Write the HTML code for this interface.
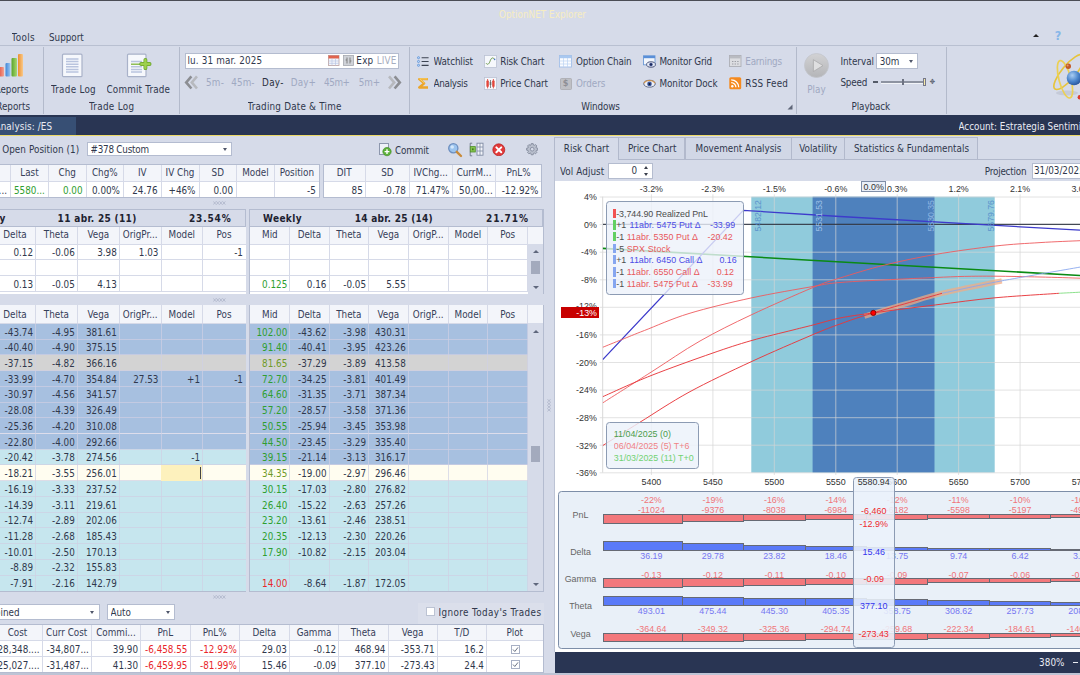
<!DOCTYPE html>
<html lang="es"><head><meta charset="utf-8"><title>OptionNET Explorer</title>
<style>
html,body{margin:0;padding:0;background:#d6dbe9}
#app{position:relative;width:1080px;height:675px;overflow:hidden;background:#d6dbe9;font-family:"DejaVu Sans Condensed","Liberation Sans",sans-serif;font-size:9.8px;color:#30384c}
#app div,#app svg.a{position:absolute}
.t,.c{white-space:nowrap;overflow:hidden}
.c{font-size:8.9px;font-family:"Liberation Sans",sans-serif}
.arr{width:0;height:0;border:2.6px solid transparent;border-top:3px solid #4f566a;border-bottom:none}
.up{width:0;height:0;border:3px solid transparent;border-bottom:3.6px solid #5f677c;border-top:none}
.dn{width:0;height:0;border:3px solid transparent;border-top:3.6px solid #5f677c;border-bottom:none}
svg text{font-family:"Liberation Sans",sans-serif}
</style></head>
<body>
<div id="app">
<div style="left:0px;top:0px;width:1080px;height:115px;background:#d6dbe9;"></div>
<div style="left:0px;top:0px;width:1080px;height:1.4px;background:#4b4d55;"></div>
<div class="t" style="left:491px;top:7.5px;width:103px;height:14px;line-height:14px;text-align:center;color:#f6edc2;letter-spacing:0.03px;">OptionNET Explorer</div>
<div class="t" style="left:11.5px;top:31px;width:35.2px;height:14px;line-height:14px;text-align:left;letter-spacing:0.41px;">Tools</div>
<div class="t" style="left:49px;top:31px;width:46.8px;height:14px;line-height:14px;text-align:left;letter-spacing:-0.01px;">Support</div>
<div class="up" style="left:1032.8px;top:34px;border-bottom-color:#222"></div>
<div class="t" style="left:1052.5px;top:29.3px;width:11px;height:14px;line-height:14px;text-align:center;color:#86b6e8;font-weight:bold;font-size:12.5px;font-family:"Liberation Sans",sans-serif;text-shadow:.5px .7px 0 #4a7fc0;">?</div>
<div style="left:0px;top:45px;width:1080px;height:1px;background:#b9c0d1;"></div>
<div style="left:43px;top:46.5px;width:1px;height:67px;background:#b3bacb;"></div>
<div style="left:179px;top:46.5px;width:1px;height:67px;background:#b3bacb;"></div>
<div style="left:409.4px;top:46.5px;width:1px;height:67px;background:#b3bacb;"></div>
<div style="left:796.2px;top:46.5px;width:1px;height:67px;background:#b3bacb;"></div>
<div style="left:946.4px;top:46.5px;width:1px;height:67px;background:#b3bacb;"></div>
<svg class="a" style="left:0px;top:53px" width="24" height="25" viewBox="0 0 24 25"><defs><linearGradient id="gr" x1="0" x2="1"><stop offset="0" stop-color="#e25a4a"/><stop offset="1" stop-color="#f3a08f"/></linearGradient><linearGradient id="gb" x1="0" x2="1"><stop offset="0" stop-color="#3f86d8"/><stop offset="1" stop-color="#9cc7f2"/></linearGradient><linearGradient id="gg" x1="0" x2="1"><stop offset="0" stop-color="#5aa42c"/><stop offset="1" stop-color="#a9d86f"/></linearGradient><linearGradient id="go" x1="0" x2="1"><stop offset="0" stop-color="#ee8f2c"/><stop offset="1" stop-color="#f8c98a"/></linearGradient></defs><rect x="-1" y="14" width="5" height="9.5" rx="1" fill="url(#gr)"/><rect x="5.5" y="10" width="5" height="13.5" rx="1" fill="url(#gb)"/><rect x="11.5" y="5" width="5.5" height="18.5" rx="1" fill="url(#gg)"/><rect x="18" y="1" width="5" height="22.5" rx="1" fill="url(#go)"/></svg>
<div class="t" style="left:-20px;top:82.7px;width:48.5px;height:14px;line-height:14px;text-align:right;">Reports</div>
<div class="t" style="left:-20px;top:100.3px;width:50px;height:14px;line-height:14px;text-align:right;">Reports</div>
<svg class="a" style="left:61px;top:52.5px" width="23" height="25" viewBox="0 0 23 25"><rect x="1.5" y="1.2" width="19.5" height="22.5" rx="1" fill="#f6f8fc" stroke="#a9b2c9" stroke-width="1.2"/><path d="M5 6h12.5M5 8.6h12.5M5 11.2h12.5M5 13.8h12.5M5 16.4h12.5M5 19h12.5" stroke="#b9c4de" stroke-width="1.5"/></svg>
<div class="t" style="left:51px;top:82.6px;width:56.7px;height:14px;line-height:14px;text-align:left;letter-spacing:0.27px;">Trade Log</div>
<svg class="a" style="left:126px;top:52.5px" width="27" height="25" viewBox="0 0 27 25"><rect x="1.5" y="1.2" width="18.5" height="22.5" rx="1" fill="#f6f8fc" stroke="#a9b2c9" stroke-width="1.2"/><path d="M5 8.6h11M5 13.8h11M5 16.4h11M5 19h11" stroke="#b9c4de" stroke-width="1.5"/><path d="M5 11.2h10" stroke="#7db43a" stroke-width="1.3"/><path d="M19.4 6.8v8.4M15.2 11h8.4" stroke="#6aa52a" stroke-width="3.8" stroke-linecap="round"/><path d="M19.4 7v8M15.4 11h8" stroke="#9ed04e" stroke-width="2.4" stroke-linecap="round"/></svg>
<div class="t" style="left:106.5px;top:82.6px;width:75.5px;height:14px;line-height:14px;text-align:left;letter-spacing:0.19px;">Commit Trade</div>
<div class="t" style="left:89px;top:100.3px;width:57px;height:14px;line-height:14px;text-align:left;letter-spacing:0.31px;">Trade Log</div>
<div style="left:185px;top:52.6px;width:213.7px;height:16.2px;background:#fff;border:1px solid #b4bccf;box-sizing:border-box;"></div>
<div class="t" style="left:187.4px;top:54.2px;width:86.8px;height:14px;line-height:14px;text-align:left;letter-spacing:0.16px;">lu. 31 mar. 2025</div>
<svg class="a" style="left:328px;top:55px" width="11.5" height="11" viewBox="0 0 11.5 11"><rect x=".5" y=".5" width="10.5" height="10" fill="#f4f6fb" stroke="#b8a0a0" stroke-width=".8"/><rect x=".5" y=".5" width="10.5" height="3" fill="#e0644e"/><path d="M.5 6h10.5M.5 8.3h10.5M4 3.5v7M7.5 3.5v7" stroke="#b9c6e4" stroke-width=".7"/></svg>
<svg class="a" style="left:342.5px;top:55px" width="11" height="11" viewBox="0 0 11 11"><rect x=".5" y=".5" width="10" height="10" fill="#cfd2d8" stroke="#a5a8b0" stroke-width=".8"/><path d="M4 2.5v6M7 2.5v6M2.6 5h1.4M7 6h1.4" stroke="#777" stroke-width=".9"/></svg>
<div class="t" style="left:356.3px;top:54.2px;width:28.9px;height:14px;line-height:14px;text-align:left;letter-spacing:0.26px;">Exp</div>
<div class="t" style="left:376.7px;top:54.2px;width:31.7px;height:14px;line-height:14px;text-align:left;color:#a6adc0;letter-spacing:0.20px;">LIVE</div>
<svg class="a" style="left:184px;top:74.6px" width="15" height="15" viewBox="0 0 15 15"><path d="M7.4 1.3L2.2 7.4l5.2 6.1" fill="none" stroke="#8c8e93" stroke-width="2.6"/><path d="M13 1.3L7.8 7.4l5.2 6.1" fill="none" stroke="#b7b9be" stroke-width="2.6"/></svg>
<svg class="a" style="left:387px;top:74.6px" width="15" height="15" viewBox="0 0 15 15"><path d="M2 1.3l5.2 6.1L2 13.5" fill="none" stroke="#b7b9be" stroke-width="2.6"/><path d="M7.6 1.3l5.2 6.1-5.2 6.1" fill="none" stroke="#8c8e93" stroke-width="2.6"/></svg>
<div class="t" style="left:205.9px;top:76.3px;width:30.1px;height:14px;line-height:14px;text-align:left;color:#a0a9c2;letter-spacing:0.36px;">5m-</div>
<div class="t" style="left:231.3px;top:76.3px;width:35.2px;height:14px;line-height:14px;text-align:left;color:#a0a9c2;letter-spacing:0.07px;">45m-</div>
<div class="t" style="left:262.1px;top:76.3px;width:33.3px;height:14px;line-height:14px;text-align:left;color:#2b3140;letter-spacing:0.29px;">Day-</div>
<div class="t" style="left:290.8px;top:76.3px;width:37px;height:14px;line-height:14px;text-align:left;color:#a0a9c2;letter-spacing:0.07px;">Day+</div>
<div class="t" style="left:323.9px;top:76.3px;width:38.1px;height:14px;line-height:14px;text-align:left;color:#a0a9c2;letter-spacing:-0.36px;">45m+</div>
<div class="t" style="left:358.7px;top:76.3px;width:33.5px;height:14px;line-height:14px;text-align:left;color:#a0a9c2;letter-spacing:-0.04px;">5m+</div>
<div class="t" style="left:247.5px;top:100.3px;width:105.8px;height:14px;line-height:14px;text-align:left;letter-spacing:0.21px;">Trading Date &amp; Time</div>
<svg class="a" style="left:417px;top:56px" width="12" height="11" viewBox="0 0 12 11"><g fill="#bcd8f6" stroke="#4f8ad8" stroke-width=".7"><circle cx="1.5" cy="1.7" r="1.05"/><circle cx="1.5" cy="5.5" r="1.05"/><circle cx="1.5" cy="9.3" r="1.05"/></g><path d="M4.6 1.7h7M4.6 5.5h7M4.6 9.3h7" stroke="#3c4352" stroke-width="1.15"/></svg>
<div class="t" style="left:433.6px;top:54.7px;width:51.4px;height:14px;line-height:14px;text-align:left;letter-spacing:-0.12px;">Watchlist</div>
<svg class="a" style="left:417px;top:77px" width="12.5" height="12.5" viewBox="0 0 12.5 12.5"><path d="M11 2.2H2.2L7.2 6.3 2.2 10.5H11" fill="none" stroke="#eba52a" stroke-width="2.3" stroke-linejoin="round"/><path d="M10.6 1.9H2.6L7.4 6" fill="none" stroke="#fad671" stroke-width=".9"/></svg>
<div class="t" style="left:433.6px;top:76.7px;width:46.2px;height:14px;line-height:14px;text-align:left;letter-spacing:-0.30px;">Analysis</div>
<svg class="a" style="left:483.5px;top:55px" width="13" height="13" viewBox="0 0 13 13"><rect x=".5" y=".5" width="12" height="12" fill="#f6f8fc" stroke="#bcc3d4" stroke-width=".8"/><path d="M2 8.2c1.8 2.4 3.2.4 4.2-2.4s2.4-4 4.2-1.6" fill="none" stroke="#6f9a4e" stroke-width="1"/><circle cx="10.6" cy="4.4" r=".8" fill="#4a78c8"/></svg>
<div class="t" style="left:500.2px;top:54.7px;width:56.4px;height:14px;line-height:14px;text-align:left;letter-spacing:-0.10px;">Risk Chart</div>
<svg class="a" style="left:483.5px;top:77px" width="13" height="13" viewBox="0 0 13 13"><rect x=".5" y=".5" width="12" height="12" fill="#f6f8fc" stroke="#bcc3d4" stroke-width=".8"/><path d="M3.6 2v9.4M9.4 2v9.4" stroke="#d9362c" stroke-width=".8"/><path d="M6.5 3v8" stroke="#555" stroke-width=".7"/><rect x="2.4" y="3.6" width="2.4" height="6.2" rx=".6" fill="#e2463c"/><rect x="8.2" y="3.6" width="2.4" height="6.2" rx=".6" fill="#e2463c"/><rect x="5.7" y="5" width="1.6" height="3" fill="#6a6a6a"/></svg>
<div class="t" style="left:500.2px;top:76.7px;width:59.8px;height:14px;line-height:14px;text-align:left;letter-spacing:-0.07px;">Price Chart</div>
<svg class="a" style="left:559px;top:55px" width="13" height="12.5" viewBox="0 0 13 12.5"><rect x=".5" y=".5" width="12" height="11.5" fill="#fbfcff" stroke="#a3bfe8" stroke-width=".9"/><rect x=".9" y=".9" width="11.2" height="2.3" fill="#a9c8f0"/><path d="M.5 6h12M.5 9h12M4.5 3v9M8.5 3v9" stroke="#bcd2f2" stroke-width=".7"/></svg>
<div class="t" style="left:576px;top:54.7px;width:67.5px;height:14px;line-height:14px;text-align:left;letter-spacing:-0.17px;">Option Chain</div>
<svg class="a" style="left:559.5px;top:77.5px" width="12" height="12" viewBox="0 0 12 12"><rect x=".5" y=".5" width="11" height="11" rx="1" fill="#bfc0c5" stroke="#a8a9af" stroke-width=".8"/></svg>
<div class="t" style="left:560.5px;top:78px;width:10px;height:11.5px;line-height:11.5px;text-align:center;color:#8e8f95;font-size:9px;font-weight:bold;font-family:"Liberation Sans",sans-serif;">$</div>
<div class="t" style="left:576px;top:76.7px;width:41.3px;height:14px;line-height:14px;text-align:left;color:#a0a9c2;letter-spacing:-0.07px;">Orders</div>
<svg class="a" style="left:642.5px;top:55px" width="13" height="13" viewBox="0 0 13 13"><rect x=".5" y=".8" width="11.5" height="9" fill="#f2f6fc" stroke="#6d9ad6" stroke-width=".9"/><rect x=".5" y=".8" width="11.5" height="2.4" fill="#5a8fd8"/><ellipse cx="8" cy="9.5" rx="4.4" ry="2.7" fill="#e4e9f4" stroke="#3f4a72" stroke-width=".9"/><circle cx="8" cy="9.5" r="1.7" fill="#34478a"/><circle cx="8" cy="9.5" r=".7" fill="#141a30"/></svg>
<div class="t" style="left:659.4px;top:54.7px;width:64.8px;height:14px;line-height:14px;text-align:left;letter-spacing:-0.18px;">Monitor Grid</div>
<svg class="a" style="left:642.5px;top:78.5px" width="13" height="9" viewBox="0 0 13 9"><ellipse cx="6.5" cy="4.7" rx="5.8" ry="3.5" fill="#eef1f8" stroke="#56607c" stroke-width=".9"/><path d="M.9 4.2C3 .6 10 .6 12.1 4.2" fill="none" stroke="#d29246" stroke-width="1.1"/><circle cx="6.5" cy="4.9" r="2.3" fill="#3c58a0"/><circle cx="6.5" cy="4.9" r="1" fill="#10162c"/></svg>
<div class="t" style="left:659.4px;top:76.7px;width:70.1px;height:14px;line-height:14px;text-align:left;letter-spacing:-0.03px;">Monitor Dock</div>
<svg class="a" style="left:729px;top:55px" width="12.5" height="12" viewBox="0 0 12.5 12"><rect x=".5" y=".5" width="11.5" height="11" fill="#dcdde1" stroke="#adafb6" stroke-width=".9"/><rect x=".9" y=".9" width="10.7" height="2.5" fill="#b9bbc1"/><path d="M3 6.5h1.4M5.6 6.5H7M8.2 6.5h1.4M3 9h1.4M5.6 9H7M8.2 9h1.4" stroke="#9c9ea6" stroke-width="1.2"/></svg>
<div class="t" style="left:745.3px;top:54.7px;width:48.7px;height:14px;line-height:14px;text-align:left;color:#a0a9c2;letter-spacing:-0.22px;">Earnings</div>
<svg class="a" style="left:729px;top:77px" width="12.5" height="12.5" viewBox="0 0 12.5 12.5"><rect x=".3" y=".3" width="11.9" height="11.9" rx="1.5" fill="#f58a1f"/><circle cx="3.3" cy="9.2" r="1.2" fill="#fff"/><path d="M2.2 5.6a4.7 4.7 0 0 1 4.7 4.7M2.2 2.8a7.5 7.5 0 0 1 7.5 7.5" fill="none" stroke="#fff" stroke-width="1.3"/></svg>
<div class="t" style="left:745.3px;top:76.7px;width:54.6px;height:14px;line-height:14px;text-align:left;letter-spacing:0.21px;">RSS Feed</div>
<div class="t" style="left:581.3px;top:100.3px;width:50.7px;height:14px;line-height:14px;text-align:left;letter-spacing:-0.11px;">Windows</div>
<svg class="a" style="left:787px;top:104.4px" width="6" height="6" viewBox="0 0 6 6"><path d="M5.5.5v5H.5z" fill="#5f6678"/></svg>
<svg class="a" style="left:804px;top:53.1px" width="25" height="25" viewBox="0 0 25 25"><defs><linearGradient id="pg" x1="0" y1="0" x2="0" y2="1"><stop offset="0" stop-color="#d2d2d4"/><stop offset="1" stop-color="#b4b5b8"/></linearGradient></defs><circle cx="12.5" cy="12.5" r="12" fill="url(#pg)" stroke="#c3c5cc" stroke-width=".8"/><path d="M9.4 6.7l9.6 5.9-9.6 5.9z" fill="#dfdfe0" stroke="#a9a9ab" stroke-width=".8" stroke-linejoin="round"/></svg>
<div class="t" style="left:799.31px;top:82.6px;width:34.38px;height:14px;line-height:14px;text-align:center;color:#a0a9c2;">Play</div>
<div class="t" style="left:840.4px;top:54.7px;width:45.6px;height:14px;line-height:14px;text-align:left;letter-spacing:-0.02px;">Interval</div>
<div style="left:876.3px;top:53.1px;width:42.1px;height:15.5px;background:#fff;border:1px solid #b4bccf;box-sizing:border-box;"></div>
<div class="t" style="left:879.8px;top:54.7px;width:31.5px;height:14px;line-height:14px;text-align:left;letter-spacing:-0.15px;">30m</div>
<div class="arr" style="left:908.5px;top:59.5px"></div>
<div class="t" style="left:840.4px;top:76px;width:39.1px;height:14px;line-height:14px;text-align:left;letter-spacing:-0.14px;">Speed</div>
<div style="left:872.8px;top:81.2px;width:5px;height:1.4px;background:#555b68;"></div>
<div style="left:881.4px;top:81.2px;width:41.2px;height:1.6px;background:#8d93a1;"></div>
<div style="left:881.4px;top:82.6px;width:41.2px;height:0.8px;background:#f2f4f8;"></div>
<div style="left:902.3px;top:79.3px;width:1.4px;height:5.4px;background:#6d7382;"></div>
<div style="left:922.6px;top:77.8px;width:3.2px;height:8.6px;background:#f5e9a8;border:1px solid #77798a;box-sizing:border-box;"></div>
<div class="t" style="left:928.5px;top:76px;width:8px;height:12px;line-height:12px;text-align:center;color:#555b68;font-size:7px;">✥</div>
<div class="t" style="left:851.5px;top:100.3px;width:50.7px;height:14px;line-height:14px;text-align:left;letter-spacing:-0.09px;">Playback</div>
<svg class="a" style="left:1040px;top:50px" width="40" height="58" viewBox="0 0 40 58"><defs><radialGradient id="ag" cx=".38" cy=".32" r=".75"><stop offset="0" stop-color="#a9cdf2"/><stop offset=".55" stop-color="#4c86cc"/><stop offset="1" stop-color="#234f94"/></radialGradient></defs><ellipse cx="27" cy="43" rx="11" ry="2.6" fill="#bfc4d2" opacity=".75"/><ellipse cx="29" cy="22" rx="22" ry="7" fill="none" stroke="#e6c43c" stroke-width="1.7" transform="rotate(-50 29 22)"/><ellipse cx="25" cy="29.3" rx="6" ry="19.3" fill="none" stroke="#ecd053" stroke-width="1.7" transform="rotate(-15 25 29.3)"/><circle cx="34" cy="28" r="7.3" fill="url(#ag)"/><circle cx="28.3" cy="16.3" r="2.7" fill="#c25a28"/><circle cx="27.6" cy="15.5" r="1" fill="#e59a6a"/><circle cx="39.8" cy="47.3" r="2.2" fill="#dc3a30"/></svg>
<div style="left:0px;top:114.6px;width:1080px;height:20.6px;background:#293553;"></div>
<div style="left:0px;top:117px;width:76px;height:18px;background:#374f74;"></div>
<div class="t" style="left:-5.5px;top:120.2px;width:69.5px;height:14px;line-height:14px;text-align:left;color:#e9ecf3;letter-spacing:0.11px;">Analysis: /ES</div>
<div class="t" style="left:958.5px;top:120px;width:154.55px;height:14px;line-height:14px;text-align:left;color:#e9ecf3;">Account: Estrategia Sentimiento</div>
<div style="left:0px;top:134.8px;width:1080px;height:1.5px;background:#ecd968;"></div>
<div style="left:0px;top:136px;width:555px;height:539px;background:#d6dbe9;"></div>
<div class="t" style="left:2.2px;top:142.3px;width:90px;height:15px;line-height:15px;text-align:left;letter-spacing:0.07px;">Open Position (1)</div>
<div style="left:87px;top:142.4px;width:145px;height:14px;background:#fff;border:1px solid #b4bcd0;box-sizing:border-box;"></div>
<div class="t" style="left:90.5px;top:143.2px;width:120px;height:14px;line-height:14px;text-align:left;letter-spacing:-0.23px;">#378 Custom</div>
<div class="arr" style="left:222.5px;top:148px"></div>
<svg class="a" style="left:378px;top:142px" width="14" height="15" viewBox="0 0 14 15"><rect x="1.5" y="1.5" width="9" height="11" fill="#eef1f8" stroke="#8d97ad"/><circle cx="9" cy="9.6" r="4.2" fill="#5db03a" stroke="#3d8a22" stroke-width=".6"/><path d="M9 7.2v4.8M6.6 9.6h4.8" stroke="#fff" stroke-width="1.4"/></svg>
<div class="t" style="left:395px;top:142.5px;width:40px;height:15px;line-height:15px;text-align:left;letter-spacing:-0.13px;">Commit</div>
<svg class="a" style="left:447px;top:142px" width="16" height="16" viewBox="0 0 16 16"><circle cx="6.3" cy="6.3" r="4.6" fill="#9cc4ee" stroke="#6d8fc0" stroke-width="1.3"/><circle cx="5.2" cy="5" r="1.8" fill="#d4e8fb"/><path d="M9.8 9.8l4.2 4.2" stroke="#c98a3a" stroke-width="2.4" stroke-linecap="round"/></svg>
<svg class="a" style="left:469px;top:142px" width="16" height="15" viewBox="0 0 16 15"><path d="M3.2 1.2h-2v12.6h2" fill="none" stroke="#6b7486" stroke-width=".9"/><rect x="1.3" y="4.6" width="5" height="5.4" fill="#86c44e" stroke="#4f8f28" stroke-width=".8"/><rect x="3" y="6.4" width="1.6" height="1.8" fill="#3f7a1f"/><rect x="8" y="1.2" width="6" height="12" fill="#f3f5fa" stroke="#7f8aa3" stroke-width=".9"/><path d="M8 5h6M8 9h6M11 1.2v12" stroke="#7f8aa3" stroke-width=".8"/></svg>
<svg class="a" style="left:492.2px;top:142.9px" width="13.6" height="13.6" viewBox="0 0 15 15"><circle cx="7.5" cy="7.5" r="6.6" fill="#e23a3a" stroke="#b51d1d" stroke-width=".8"/><path d="M4.8 4.8l5.4 5.4M10.2 4.8l-5.4 5.4" stroke="#fff" stroke-width="2.2" stroke-linecap="round"/></svg>
<svg class="a" style="left:525.6px;top:143.2px" width="12.4" height="12.4" viewBox="0 0 14 14"><path d="M13.30 5.90L13.30 8.10L11.71 8.37L11.29 9.36L12.24 10.68L10.68 12.24L9.36 11.29L8.37 11.71L8.10 13.30L5.90 13.30L5.63 11.71L4.64 11.29L3.32 12.24L1.76 10.68L2.71 9.36L2.29 8.37L0.70 8.10L0.70 5.90L2.29 5.63L2.71 4.64L1.76 3.32L3.32 1.76L4.64 2.71L5.63 2.29L5.90 0.70L8.10 0.70L8.37 2.29L9.36 2.71L10.68 1.76L12.24 3.32L11.29 4.64L11.71 5.63Z" fill="#b9bfcd" stroke="#7a8294" stroke-width=".9" stroke-linejoin="round"/><circle cx="7" cy="7" r="2.1" fill="#d6dbe9" stroke="#7d8597" stroke-width=".9"/></svg>
<div style="left:-28px;top:164px;width:347.3px;height:33px;background:#fff;"></div>
<div style="left:-28px;top:164px;width:347.3px;height:17.3px;background:#f3f5fa;"></div>
<div style="left:-28px;top:180.8px;width:347.3px;height:1px;background:#d6dae8;"></div>
<div style="left:10px;top:164px;width:1px;height:17.3px;background:#d6dae8;"></div>
<div style="left:10px;top:181.3px;width:1px;height:15.7px;background:#d6dae8;"></div>
<div style="left:48px;top:164px;width:1px;height:17.3px;background:#d6dae8;"></div>
<div style="left:48px;top:181.3px;width:1px;height:15.7px;background:#d6dae8;"></div>
<div style="left:85.5px;top:164px;width:1px;height:17.3px;background:#d6dae8;"></div>
<div style="left:85.5px;top:181.3px;width:1px;height:15.7px;background:#d6dae8;"></div>
<div style="left:123px;top:164px;width:1px;height:17.3px;background:#d6dae8;"></div>
<div style="left:123px;top:181.3px;width:1px;height:15.7px;background:#d6dae8;"></div>
<div style="left:160.5px;top:164px;width:1px;height:17.3px;background:#d6dae8;"></div>
<div style="left:160.5px;top:181.3px;width:1px;height:15.7px;background:#d6dae8;"></div>
<div style="left:198.5px;top:164px;width:1px;height:17.3px;background:#d6dae8;"></div>
<div style="left:198.5px;top:181.3px;width:1px;height:15.7px;background:#d6dae8;"></div>
<div style="left:236px;top:164px;width:1px;height:17.3px;background:#d6dae8;"></div>
<div style="left:236px;top:181.3px;width:1px;height:15.7px;background:#d6dae8;"></div>
<div style="left:274px;top:164px;width:1px;height:17.3px;background:#d6dae8;"></div>
<div style="left:274px;top:181.3px;width:1px;height:15.7px;background:#d6dae8;"></div>
<div class="t" style="left:10.5px;top:163.7px;width:38px;height:17.3px;line-height:17.3px;text-align:center;color:#364059;">Last</div>
<div class="t" style="left:48.5px;top:163.7px;width:37.5px;height:17.3px;line-height:17.3px;text-align:center;color:#364059;">Chg</div>
<div class="t" style="left:86px;top:163.7px;width:37.5px;height:17.3px;line-height:17.3px;text-align:center;color:#364059;">Chg%</div>
<div class="t" style="left:123.5px;top:163.7px;width:37.5px;height:17.3px;line-height:17.3px;text-align:center;color:#364059;">IV</div>
<div class="t" style="left:161px;top:163.7px;width:38px;height:17.3px;line-height:17.3px;text-align:center;color:#364059;">IV Chg</div>
<div class="t" style="left:199px;top:163.7px;width:37.5px;height:17.3px;line-height:17.3px;text-align:center;color:#364059;">SD</div>
<div class="t" style="left:236.5px;top:163.7px;width:38px;height:17.3px;line-height:17.3px;text-align:center;color:#364059;">Model</div>
<div class="t" style="left:274.5px;top:163.7px;width:44.8px;height:17.3px;line-height:17.3px;text-align:center;color:#364059;">Position</div>
<div class="t" style="left:-27.5px;top:183.2px;width:38px;height:15.7px;line-height:15.7px;text-align:right;padding-right:3.5px;box-sizing:border-box;">...</div>
<div class="t" style="left:10.5px;top:183.2px;width:38px;height:15.7px;line-height:15.7px;text-align:left;color:#2f9e2f;padding-left:3.5px;box-sizing:border-box;">5580...</div>
<div class="t" style="left:48.5px;top:183.2px;width:37.5px;height:15.7px;line-height:15.7px;text-align:right;color:#2f9e2f;padding-right:3.5px;box-sizing:border-box;">0.00</div>
<div class="t" style="left:86px;top:183.2px;width:37.5px;height:15.7px;line-height:15.7px;text-align:right;padding-right:3.5px;box-sizing:border-box;">0.00%</div>
<div class="t" style="left:123.5px;top:183.2px;width:37.5px;height:15.7px;line-height:15.7px;text-align:right;padding-right:3.5px;box-sizing:border-box;">24.76</div>
<div class="t" style="left:161px;top:183.2px;width:38px;height:15.7px;line-height:15.7px;text-align:right;padding-right:3.5px;box-sizing:border-box;">+46%</div>
<div class="t" style="left:199px;top:183.2px;width:37.5px;height:15.7px;line-height:15.7px;text-align:right;padding-right:3.5px;box-sizing:border-box;">0.00</div>
<div class="t" style="left:274.5px;top:183.2px;width:44.8px;height:15.7px;line-height:15.7px;text-align:right;padding-right:3.5px;box-sizing:border-box;">-5</div>
<div style="left:-28px;top:164px;width:347.8px;height:33.5px;border:1px solid #b4bcd0;box-sizing:border-box;"></div>
<div style="left:322.5px;top:164px;width:219px;height:33px;background:#fff;"></div>
<div style="left:322.5px;top:164px;width:219px;height:17.3px;background:#f3f5fa;"></div>
<div style="left:322.5px;top:180.8px;width:219px;height:1px;background:#d6dae8;"></div>
<div style="left:365.3px;top:164px;width:1px;height:17.3px;background:#d6dae8;"></div>
<div style="left:365.3px;top:181.3px;width:1px;height:15.7px;background:#d6dae8;"></div>
<div style="left:408.5px;top:164px;width:1px;height:17.3px;background:#d6dae8;"></div>
<div style="left:408.5px;top:181.3px;width:1px;height:15.7px;background:#d6dae8;"></div>
<div style="left:451.9px;top:164px;width:1px;height:17.3px;background:#d6dae8;"></div>
<div style="left:451.9px;top:181.3px;width:1px;height:15.7px;background:#d6dae8;"></div>
<div style="left:495.2px;top:164px;width:1px;height:17.3px;background:#d6dae8;"></div>
<div style="left:495.2px;top:181.3px;width:1px;height:15.7px;background:#d6dae8;"></div>
<div class="t" style="left:322.5px;top:163.7px;width:43.3px;height:17.3px;line-height:17.3px;text-align:center;color:#364059;">DIT</div>
<div class="t" style="left:365.8px;top:163.7px;width:43.2px;height:17.3px;line-height:17.3px;text-align:center;color:#364059;">SD</div>
<div class="t" style="left:409px;top:163.7px;width:43.4px;height:17.3px;line-height:17.3px;text-align:center;color:#364059;">IVChg...</div>
<div class="t" style="left:452.4px;top:163.7px;width:43.3px;height:17.3px;line-height:17.3px;text-align:center;color:#364059;">CurrM...</div>
<div class="t" style="left:495.7px;top:163.7px;width:45.8px;height:17.3px;line-height:17.3px;text-align:center;color:#364059;">PnL%</div>
<div class="t" style="left:322.5px;top:183.2px;width:43.3px;height:15.7px;line-height:15.7px;text-align:right;padding-right:3px;box-sizing:border-box;">85</div>
<div class="t" style="left:365.8px;top:183.2px;width:43.2px;height:15.7px;line-height:15.7px;text-align:right;padding-right:3px;box-sizing:border-box;">-0.78</div>
<div class="t" style="left:409px;top:183.2px;width:43.4px;height:15.7px;line-height:15.7px;text-align:right;padding-right:3px;box-sizing:border-box;">71.47%</div>
<div class="t" style="left:452.4px;top:183.2px;width:43.3px;height:15.7px;line-height:15.7px;text-align:right;padding-right:3px;box-sizing:border-box;">50,00...</div>
<div class="t" style="left:495.7px;top:183.2px;width:45.8px;height:15.7px;line-height:15.7px;text-align:right;padding-right:3px;box-sizing:border-box;">-12.92%</div>
<div style="left:322.5px;top:164px;width:219.5px;height:33.5px;border:1px solid #b4bcd0;box-sizing:border-box;"></div>
<svg class="a" style="left:212.5px;top:200.5px" width="13" height="4" viewBox="0 0 13 4"><path d="M0.3 .4l2.8 3.2M3.1 .4l-2.8 3.2M3.4 .4l2.8 3.2M6.2 .4l-2.8 3.2M6.5 .4l2.8 3.2M9.3 .4l-2.8 3.2M9.6 .4l2.8 3.2M12.4 .4l-2.8 3.2" stroke="#a9b0c6" stroke-width=".7" fill="none"/></svg>
<svg class="a" style="left:212.5px;top:298px" width="13" height="4" viewBox="0 0 13 4"><path d="M0.3 .4l2.8 3.2M3.1 .4l-2.8 3.2M3.4 .4l2.8 3.2M6.2 .4l-2.8 3.2M6.5 .4l2.8 3.2M9.3 .4l-2.8 3.2M9.6 .4l2.8 3.2M12.4 .4l-2.8 3.2" stroke="#a9b0c6" stroke-width=".7" fill="none"/></svg>
<svg class="a" style="left:212.5px;top:594.7px" width="13" height="4" viewBox="0 0 13 4"><path d="M0.3 .4l2.8 3.2M3.1 .4l-2.8 3.2M3.4 .4l2.8 3.2M6.2 .4l-2.8 3.2M6.5 .4l2.8 3.2M9.3 .4l-2.8 3.2M9.6 .4l2.8 3.2M12.4 .4l-2.8 3.2" stroke="#a9b0c6" stroke-width=".7" fill="none"/></svg>
<div style="left:-10px;top:208.7px;width:256px;height:85.5px;background:#d6dbe9;border:1px solid #b4bcd0;box-sizing:border-box;"></div>
<div class="t" style="left:-60px;top:210px;width:65.5px;height:17px;line-height:17px;text-align:right;font-weight:bold;font-size:10px;color:#1d2230;">Weekly</div>
<div class="t" style="left:57.6px;top:210px;width:100px;height:17px;line-height:17px;text-align:left;font-weight:bold;font-size:10px;color:#1d2230;letter-spacing:0.33px;">11 abr. 25 (11)</div>
<div class="t" style="left:189px;top:210px;width:61px;height:17px;line-height:17px;text-align:left;font-weight:bold;font-size:10px;color:#1d2230;letter-spacing:0.85px;">23.54%</div>
<div style="left:-10px;top:226.5px;width:255.5px;height:64.7px;background:#fff;"></div>
<div style="left:-10px;top:226.5px;width:255.5px;height:17.5px;background:#f3f5fa;"></div>
<div style="left:-10px;top:243.5px;width:255.5px;height:1px;background:#d6dae8;"></div>
<div style="left:-10px;top:259.2px;width:255.5px;height:1px;background:#d6dae8;"></div>
<div style="left:-10px;top:274.9px;width:255.5px;height:1px;background:#d6dae8;"></div>
<div style="left:35px;top:226.5px;width:1px;height:17.5px;background:#d6dae8;"></div>
<div style="left:35px;top:244px;width:1px;height:47.2px;background:#d6dae8;"></div>
<div style="left:76.8px;top:226.5px;width:1px;height:17.5px;background:#d6dae8;"></div>
<div style="left:76.8px;top:244px;width:1px;height:47.2px;background:#d6dae8;"></div>
<div style="left:118.8px;top:226.5px;width:1px;height:17.5px;background:#d6dae8;"></div>
<div style="left:118.8px;top:244px;width:1px;height:47.2px;background:#d6dae8;"></div>
<div style="left:160.5px;top:226.5px;width:1px;height:17.5px;background:#d6dae8;"></div>
<div style="left:160.5px;top:244px;width:1px;height:47.2px;background:#d6dae8;"></div>
<div style="left:202.1px;top:226.5px;width:1px;height:17.5px;background:#d6dae8;"></div>
<div style="left:202.1px;top:244px;width:1px;height:47.2px;background:#d6dae8;"></div>
<div class="t" style="left:-5.5px;top:226.2px;width:41px;height:17.5px;line-height:17.5px;text-align:center;color:#364059;">Delta</div>
<div class="t" style="left:35.5px;top:226.2px;width:41.8px;height:17.5px;line-height:17.5px;text-align:center;color:#364059;">Theta</div>
<div class="t" style="left:77.3px;top:226.2px;width:42px;height:17.5px;line-height:17.5px;text-align:center;color:#364059;">Vega</div>
<div class="t" style="left:119.3px;top:226.2px;width:41.7px;height:17.5px;line-height:17.5px;text-align:center;color:#364059;">OrigPr...</div>
<div class="t" style="left:161px;top:226.2px;width:41.6px;height:17.5px;line-height:17.5px;text-align:center;color:#364059;">Model</div>
<div class="t" style="left:202.6px;top:226.2px;width:42.9px;height:17.5px;line-height:17.5px;text-align:center;color:#364059;">Pos</div>
<div class="t" style="left:-5.5px;top:245.1px;width:41px;height:15.7px;line-height:15.7px;text-align:right;padding-right:2.5px;box-sizing:border-box;">0.12</div>
<div class="t" style="left:35.5px;top:245.1px;width:41.8px;height:15.7px;line-height:15.7px;text-align:right;padding-right:2.5px;box-sizing:border-box;">-0.06</div>
<div class="t" style="left:77.3px;top:245.1px;width:42px;height:15.7px;line-height:15.7px;text-align:right;padding-right:2.5px;box-sizing:border-box;">3.98</div>
<div class="t" style="left:119.3px;top:245.1px;width:41.7px;height:15.7px;line-height:15.7px;text-align:right;padding-right:2.5px;box-sizing:border-box;">1.03</div>
<div class="t" style="left:202.6px;top:245.1px;width:42.9px;height:15.7px;line-height:15.7px;text-align:right;padding-right:2.5px;box-sizing:border-box;">-1</div>
<div class="t" style="left:-5.5px;top:276.5px;width:41px;height:15.8px;line-height:15.8px;text-align:right;padding-right:2.5px;box-sizing:border-box;">0.13</div>
<div class="t" style="left:35.5px;top:276.5px;width:41.8px;height:15.8px;line-height:15.8px;text-align:right;padding-right:2.5px;box-sizing:border-box;">-0.05</div>
<div class="t" style="left:77.3px;top:276.5px;width:42px;height:15.8px;line-height:15.8px;text-align:right;padding-right:2.5px;box-sizing:border-box;">4.13</div>
<div style="left:-10px;top:291px;width:256px;height:1px;background:#d6dae8;"></div>
<div style="left:-10px;top:291.5px;width:255.5px;height:2.2px;background:#fff;"></div>
<div style="left:-10px;top:226px;width:256px;height:1px;background:#b4bcd0;"></div>
<div style="left:249.1px;top:208.7px;width:294.4px;height:85.5px;background:#d6dbe9;border:1px solid #b4bcd0;box-sizing:border-box;"></div>
<div class="t" style="left:263px;top:210px;width:60px;height:17px;line-height:17px;text-align:left;font-weight:bold;font-size:10px;color:#1d2230;letter-spacing:0.36px;">Weekly</div>
<div class="t" style="left:354.8px;top:210px;width:100px;height:17px;line-height:17px;text-align:left;font-weight:bold;font-size:10px;color:#1d2230;letter-spacing:0.27px;">14 abr. 25 (14)</div>
<div class="t" style="left:486px;top:210px;width:58px;height:17px;line-height:17px;text-align:left;font-weight:bold;font-size:10px;color:#1d2230;letter-spacing:0.89px;">21.71%</div>
<div style="left:250px;top:226.5px;width:292.5px;height:64.7px;background:#fff;"></div>
<div style="left:250px;top:226.5px;width:292.5px;height:17.5px;background:#f3f5fa;"></div>
<div style="left:250px;top:243.5px;width:292.5px;height:1px;background:#d6dae8;"></div>
<div style="left:250px;top:259.2px;width:292.5px;height:1px;background:#d6dae8;"></div>
<div style="left:250px;top:274.9px;width:292.5px;height:1px;background:#d6dae8;"></div>
<div style="left:289.3px;top:226.5px;width:1px;height:17.5px;background:#d6dae8;"></div>
<div style="left:289.3px;top:244px;width:1px;height:47.2px;background:#d6dae8;"></div>
<div style="left:328.5px;top:226.5px;width:1px;height:17.5px;background:#d6dae8;"></div>
<div style="left:328.5px;top:244px;width:1px;height:47.2px;background:#d6dae8;"></div>
<div style="left:368.1px;top:226.5px;width:1px;height:17.5px;background:#d6dae8;"></div>
<div style="left:368.1px;top:244px;width:1px;height:47.2px;background:#d6dae8;"></div>
<div style="left:407.8px;top:226.5px;width:1px;height:17.5px;background:#d6dae8;"></div>
<div style="left:407.8px;top:244px;width:1px;height:47.2px;background:#d6dae8;"></div>
<div style="left:447.5px;top:226.5px;width:1px;height:17.5px;background:#d6dae8;"></div>
<div style="left:447.5px;top:244px;width:1px;height:47.2px;background:#d6dae8;"></div>
<div style="left:487.2px;top:226.5px;width:1px;height:17.5px;background:#d6dae8;"></div>
<div style="left:487.2px;top:244px;width:1px;height:47.2px;background:#d6dae8;"></div>
<div style="left:527.3px;top:226.5px;width:1px;height:17.5px;background:#d6dae8;"></div>
<div style="left:527.3px;top:244px;width:1px;height:47.2px;background:#d6dae8;"></div>
<div class="t" style="left:250px;top:226.2px;width:39.8px;height:17.5px;line-height:17.5px;text-align:center;color:#364059;">Mid</div>
<div class="t" style="left:289.8px;top:226.2px;width:39.2px;height:17.5px;line-height:17.5px;text-align:center;color:#364059;">Delta</div>
<div class="t" style="left:329px;top:226.2px;width:39.6px;height:17.5px;line-height:17.5px;text-align:center;color:#364059;">Theta</div>
<div class="t" style="left:368.6px;top:226.2px;width:39.7px;height:17.5px;line-height:17.5px;text-align:center;color:#364059;">Vega</div>
<div class="t" style="left:408.3px;top:226.2px;width:39.7px;height:17.5px;line-height:17.5px;text-align:center;color:#364059;">OrigP...</div>
<div class="t" style="left:448px;top:226.2px;width:39.7px;height:17.5px;line-height:17.5px;text-align:center;color:#364059;">Model</div>
<div class="t" style="left:487.7px;top:226.2px;width:40.1px;height:17.5px;line-height:17.5px;text-align:center;color:#364059;">Pos</div>
<div class="t" style="left:250px;top:276.5px;width:39.8px;height:15.8px;line-height:15.8px;text-align:right;color:#2f9e2f;padding-right:2.5px;box-sizing:border-box;">0.125</div>
<div class="t" style="left:289.8px;top:276.5px;width:39.2px;height:15.8px;line-height:15.8px;text-align:right;padding-right:2.5px;box-sizing:border-box;">0.16</div>
<div class="t" style="left:329px;top:276.5px;width:39.6px;height:15.8px;line-height:15.8px;text-align:right;padding-right:2.5px;box-sizing:border-box;">-0.05</div>
<div class="t" style="left:368.6px;top:276.5px;width:39.7px;height:15.8px;line-height:15.8px;text-align:right;padding-right:2.5px;box-sizing:border-box;">5.55</div>
<div style="left:250px;top:291px;width:292.5px;height:1px;background:#d6dae8;"></div>
<div style="left:250px;top:291.5px;width:292.5px;height:2.2px;background:#fff;"></div>
<div style="left:250px;top:226px;width:292.5px;height:1px;background:#b4bcd0;"></div>
<div style="left:528.3px;top:244px;width:14.3px;height:50px;background:#d6dbe9;"></div>
<div class="up" style="left:532.6px;top:249.5px"></div>
<div style="left:530.8px;top:260.7px;width:9px;height:13.3px;background:#a3aabd;"></div>
<div class="dn" style="left:532.6px;top:285.5px"></div>
<div style="left:-10px;top:304.8px;width:256px;height:287.01px;background:#d6dbe9;border:1px solid #b4bcd0;box-sizing:border-box;"></div>
<div style="left:-10px;top:305.3px;width:255.5px;height:285.51px;background:#fff;"></div>
<div style="left:-10px;top:305.3px;width:255.5px;height:18.1px;background:#f3f5fa;"></div>
<div style="left:-10px;top:323.4px;width:255.5px;height:15.73px;background:#a7c0e0;"></div>
<div style="left:-10px;top:339.13px;width:255.5px;height:15.73px;background:#a7c0e0;"></div>
<div style="left:-10px;top:354.86px;width:255.5px;height:15.73px;background:#d3d3d3;"></div>
<div style="left:-10px;top:370.59px;width:255.5px;height:15.73px;background:#a7c0e0;"></div>
<div style="left:-10px;top:386.32px;width:255.5px;height:15.73px;background:#a7c0e0;"></div>
<div style="left:-10px;top:402.05px;width:255.5px;height:15.73px;background:#a7c0e0;"></div>
<div style="left:-10px;top:417.78px;width:255.5px;height:15.73px;background:#a7c0e0;"></div>
<div style="left:-10px;top:433.51px;width:255.5px;height:15.73px;background:#a7c0e0;"></div>
<div style="left:-10px;top:449.24px;width:255.5px;height:15.73px;background:#c6e6ee;"></div>
<div style="left:-10px;top:464.97px;width:255.5px;height:15.73px;background:#fffdf0;"></div>
<div style="left:-10px;top:480.7px;width:255.5px;height:15.73px;background:#c6e6ee;"></div>
<div style="left:-10px;top:496.43px;width:255.5px;height:15.73px;background:#c6e6ee;"></div>
<div style="left:-10px;top:512.16px;width:255.5px;height:15.73px;background:#c6e6ee;"></div>
<div style="left:-10px;top:527.89px;width:255.5px;height:15.73px;background:#c6e6ee;"></div>
<div style="left:-10px;top:543.62px;width:255.5px;height:15.73px;background:#c6e6ee;"></div>
<div style="left:-10px;top:559.35px;width:255.5px;height:15.73px;background:#c6e6ee;"></div>
<div style="left:-10px;top:575.08px;width:255.5px;height:15.73px;background:#c6e6ee;"></div>
<div style="left:-10px;top:322.9px;width:255.5px;height:1px;background:#d6dae8;"></div>
<div style="left:-10px;top:338.63px;width:255.5px;height:1px;background:rgba(206,206,226,.7);"></div>
<div style="left:-10px;top:354.36px;width:255.5px;height:1px;background:rgba(206,206,226,.7);"></div>
<div style="left:-10px;top:370.09px;width:255.5px;height:1px;background:rgba(206,206,226,.7);"></div>
<div style="left:-10px;top:385.82px;width:255.5px;height:1px;background:rgba(206,206,226,.7);"></div>
<div style="left:-10px;top:401.55px;width:255.5px;height:1px;background:rgba(206,206,226,.7);"></div>
<div style="left:-10px;top:417.28px;width:255.5px;height:1px;background:rgba(206,206,226,.7);"></div>
<div style="left:-10px;top:433.01px;width:255.5px;height:1px;background:rgba(206,206,226,.7);"></div>
<div style="left:-10px;top:448.74px;width:255.5px;height:1px;background:rgba(206,206,226,.7);"></div>
<div style="left:-10px;top:464.47px;width:255.5px;height:1px;background:rgba(206,206,226,.7);"></div>
<div style="left:-10px;top:480.2px;width:255.5px;height:1px;background:rgba(206,206,226,.7);"></div>
<div style="left:-10px;top:495.93px;width:255.5px;height:1px;background:rgba(206,206,226,.7);"></div>
<div style="left:-10px;top:511.66px;width:255.5px;height:1px;background:rgba(206,206,226,.7);"></div>
<div style="left:-10px;top:527.39px;width:255.5px;height:1px;background:rgba(206,206,226,.7);"></div>
<div style="left:-10px;top:543.12px;width:255.5px;height:1px;background:rgba(206,206,226,.7);"></div>
<div style="left:-10px;top:558.85px;width:255.5px;height:1px;background:rgba(206,206,226,.7);"></div>
<div style="left:-10px;top:574.58px;width:255.5px;height:1px;background:rgba(206,206,226,.7);"></div>
<div style="left:35px;top:305.3px;width:1px;height:18.1px;background:#d6dae8;"></div>
<div style="left:35px;top:323.4px;width:1px;height:267.41px;background:rgba(206,208,228,.7);"></div>
<div style="left:76.8px;top:305.3px;width:1px;height:18.1px;background:#d6dae8;"></div>
<div style="left:76.8px;top:323.4px;width:1px;height:267.41px;background:rgba(206,208,228,.7);"></div>
<div style="left:118.8px;top:305.3px;width:1px;height:18.1px;background:#d6dae8;"></div>
<div style="left:118.8px;top:323.4px;width:1px;height:267.41px;background:rgba(206,208,228,.7);"></div>
<div style="left:160.5px;top:305.3px;width:1px;height:18.1px;background:#d6dae8;"></div>
<div style="left:160.5px;top:323.4px;width:1px;height:267.41px;background:rgba(206,208,228,.7);"></div>
<div style="left:202.1px;top:305.3px;width:1px;height:18.1px;background:#d6dae8;"></div>
<div style="left:202.1px;top:323.4px;width:1px;height:267.41px;background:rgba(206,208,228,.7);"></div>
<div class="t" style="left:-5.5px;top:306px;width:41px;height:18.1px;line-height:18.1px;text-align:center;color:#364059;">Delta</div>
<div class="t" style="left:35.5px;top:306px;width:41.8px;height:18.1px;line-height:18.1px;text-align:center;color:#364059;">Theta</div>
<div class="t" style="left:77.3px;top:306px;width:42px;height:18.1px;line-height:18.1px;text-align:center;color:#364059;">Vega</div>
<div class="t" style="left:119.3px;top:306px;width:41.7px;height:18.1px;line-height:18.1px;text-align:center;color:#364059;">OrigPr...</div>
<div class="t" style="left:161px;top:306px;width:41.6px;height:18.1px;line-height:18.1px;text-align:center;color:#364059;">Model</div>
<div class="t" style="left:202.6px;top:306px;width:42.9px;height:18.1px;line-height:18.1px;text-align:center;color:#364059;">Pos</div>
<div class="t" style="left:-5.5px;top:324.5px;width:41px;height:15.73px;line-height:15.73px;text-align:right;padding-right:2.5px;box-sizing:border-box;">-43.74</div>
<div class="t" style="left:35.5px;top:324.5px;width:41.8px;height:15.73px;line-height:15.73px;text-align:right;padding-right:2.5px;box-sizing:border-box;">-4.95</div>
<div class="t" style="left:77.3px;top:324.5px;width:42px;height:15.73px;line-height:15.73px;text-align:right;padding-right:2.5px;box-sizing:border-box;">381.61</div>
<div class="t" style="left:-5.5px;top:340.23px;width:41px;height:15.73px;line-height:15.73px;text-align:right;padding-right:2.5px;box-sizing:border-box;">-40.40</div>
<div class="t" style="left:35.5px;top:340.23px;width:41.8px;height:15.73px;line-height:15.73px;text-align:right;padding-right:2.5px;box-sizing:border-box;">-4.90</div>
<div class="t" style="left:77.3px;top:340.23px;width:42px;height:15.73px;line-height:15.73px;text-align:right;padding-right:2.5px;box-sizing:border-box;">375.15</div>
<div class="t" style="left:-5.5px;top:355.96px;width:41px;height:15.73px;line-height:15.73px;text-align:right;padding-right:2.5px;box-sizing:border-box;">-37.15</div>
<div class="t" style="left:35.5px;top:355.96px;width:41.8px;height:15.73px;line-height:15.73px;text-align:right;padding-right:2.5px;box-sizing:border-box;">-4.82</div>
<div class="t" style="left:77.3px;top:355.96px;width:42px;height:15.73px;line-height:15.73px;text-align:right;padding-right:2.5px;box-sizing:border-box;">366.16</div>
<div class="t" style="left:-5.5px;top:371.69px;width:41px;height:15.73px;line-height:15.73px;text-align:right;padding-right:2.5px;box-sizing:border-box;">-33.99</div>
<div class="t" style="left:35.5px;top:371.69px;width:41.8px;height:15.73px;line-height:15.73px;text-align:right;padding-right:2.5px;box-sizing:border-box;">-4.70</div>
<div class="t" style="left:77.3px;top:371.69px;width:42px;height:15.73px;line-height:15.73px;text-align:right;padding-right:2.5px;box-sizing:border-box;">354.84</div>
<div class="t" style="left:119.3px;top:371.69px;width:41.7px;height:15.73px;line-height:15.73px;text-align:right;padding-right:2.5px;box-sizing:border-box;">27.53</div>
<div class="t" style="left:161px;top:371.69px;width:41.6px;height:15.73px;line-height:15.73px;text-align:right;padding-right:2.5px;box-sizing:border-box;">+1</div>
<div class="t" style="left:202.6px;top:371.69px;width:42.9px;height:15.73px;line-height:15.73px;text-align:right;padding-right:2.5px;box-sizing:border-box;">-1</div>
<div class="t" style="left:-5.5px;top:387.42px;width:41px;height:15.73px;line-height:15.73px;text-align:right;padding-right:2.5px;box-sizing:border-box;">-30.97</div>
<div class="t" style="left:35.5px;top:387.42px;width:41.8px;height:15.73px;line-height:15.73px;text-align:right;padding-right:2.5px;box-sizing:border-box;">-4.56</div>
<div class="t" style="left:77.3px;top:387.42px;width:42px;height:15.73px;line-height:15.73px;text-align:right;padding-right:2.5px;box-sizing:border-box;">341.57</div>
<div class="t" style="left:-5.5px;top:403.15px;width:41px;height:15.73px;line-height:15.73px;text-align:right;padding-right:2.5px;box-sizing:border-box;">-28.08</div>
<div class="t" style="left:35.5px;top:403.15px;width:41.8px;height:15.73px;line-height:15.73px;text-align:right;padding-right:2.5px;box-sizing:border-box;">-4.39</div>
<div class="t" style="left:77.3px;top:403.15px;width:42px;height:15.73px;line-height:15.73px;text-align:right;padding-right:2.5px;box-sizing:border-box;">326.49</div>
<div class="t" style="left:-5.5px;top:418.88px;width:41px;height:15.73px;line-height:15.73px;text-align:right;padding-right:2.5px;box-sizing:border-box;">-25.36</div>
<div class="t" style="left:35.5px;top:418.88px;width:41.8px;height:15.73px;line-height:15.73px;text-align:right;padding-right:2.5px;box-sizing:border-box;">-4.20</div>
<div class="t" style="left:77.3px;top:418.88px;width:42px;height:15.73px;line-height:15.73px;text-align:right;padding-right:2.5px;box-sizing:border-box;">310.08</div>
<div class="t" style="left:-5.5px;top:434.61px;width:41px;height:15.73px;line-height:15.73px;text-align:right;padding-right:2.5px;box-sizing:border-box;">-22.80</div>
<div class="t" style="left:35.5px;top:434.61px;width:41.8px;height:15.73px;line-height:15.73px;text-align:right;padding-right:2.5px;box-sizing:border-box;">-4.00</div>
<div class="t" style="left:77.3px;top:434.61px;width:42px;height:15.73px;line-height:15.73px;text-align:right;padding-right:2.5px;box-sizing:border-box;">292.66</div>
<div class="t" style="left:-5.5px;top:450.34px;width:41px;height:15.73px;line-height:15.73px;text-align:right;padding-right:2.5px;box-sizing:border-box;">-20.42</div>
<div class="t" style="left:35.5px;top:450.34px;width:41.8px;height:15.73px;line-height:15.73px;text-align:right;padding-right:2.5px;box-sizing:border-box;">-3.78</div>
<div class="t" style="left:77.3px;top:450.34px;width:42px;height:15.73px;line-height:15.73px;text-align:right;padding-right:2.5px;box-sizing:border-box;">274.56</div>
<div class="t" style="left:161px;top:450.34px;width:41.6px;height:15.73px;line-height:15.73px;text-align:right;padding-right:2.5px;box-sizing:border-box;">-1</div>
<div class="t" style="left:-5.5px;top:466.07px;width:41px;height:15.73px;line-height:15.73px;text-align:right;padding-right:2.5px;box-sizing:border-box;">-18.21</div>
<div class="t" style="left:35.5px;top:466.07px;width:41.8px;height:15.73px;line-height:15.73px;text-align:right;padding-right:2.5px;box-sizing:border-box;">-3.55</div>
<div class="t" style="left:77.3px;top:466.07px;width:42px;height:15.73px;line-height:15.73px;text-align:right;padding-right:2.5px;box-sizing:border-box;">256.01</div>
<div class="t" style="left:-5.5px;top:481.8px;width:41px;height:15.73px;line-height:15.73px;text-align:right;padding-right:2.5px;box-sizing:border-box;">-16.19</div>
<div class="t" style="left:35.5px;top:481.8px;width:41.8px;height:15.73px;line-height:15.73px;text-align:right;padding-right:2.5px;box-sizing:border-box;">-3.33</div>
<div class="t" style="left:77.3px;top:481.8px;width:42px;height:15.73px;line-height:15.73px;text-align:right;padding-right:2.5px;box-sizing:border-box;">237.52</div>
<div class="t" style="left:-5.5px;top:497.53px;width:41px;height:15.73px;line-height:15.73px;text-align:right;padding-right:2.5px;box-sizing:border-box;">-14.39</div>
<div class="t" style="left:35.5px;top:497.53px;width:41.8px;height:15.73px;line-height:15.73px;text-align:right;padding-right:2.5px;box-sizing:border-box;">-3.11</div>
<div class="t" style="left:77.3px;top:497.53px;width:42px;height:15.73px;line-height:15.73px;text-align:right;padding-right:2.5px;box-sizing:border-box;">219.61</div>
<div class="t" style="left:-5.5px;top:513.26px;width:41px;height:15.73px;line-height:15.73px;text-align:right;padding-right:2.5px;box-sizing:border-box;">-12.74</div>
<div class="t" style="left:35.5px;top:513.26px;width:41.8px;height:15.73px;line-height:15.73px;text-align:right;padding-right:2.5px;box-sizing:border-box;">-2.89</div>
<div class="t" style="left:77.3px;top:513.26px;width:42px;height:15.73px;line-height:15.73px;text-align:right;padding-right:2.5px;box-sizing:border-box;">202.06</div>
<div class="t" style="left:-5.5px;top:528.99px;width:41px;height:15.73px;line-height:15.73px;text-align:right;padding-right:2.5px;box-sizing:border-box;">-11.28</div>
<div class="t" style="left:35.5px;top:528.99px;width:41.8px;height:15.73px;line-height:15.73px;text-align:right;padding-right:2.5px;box-sizing:border-box;">-2.68</div>
<div class="t" style="left:77.3px;top:528.99px;width:42px;height:15.73px;line-height:15.73px;text-align:right;padding-right:2.5px;box-sizing:border-box;">185.43</div>
<div class="t" style="left:-5.5px;top:544.72px;width:41px;height:15.73px;line-height:15.73px;text-align:right;padding-right:2.5px;box-sizing:border-box;">-10.01</div>
<div class="t" style="left:35.5px;top:544.72px;width:41.8px;height:15.73px;line-height:15.73px;text-align:right;padding-right:2.5px;box-sizing:border-box;">-2.50</div>
<div class="t" style="left:77.3px;top:544.72px;width:42px;height:15.73px;line-height:15.73px;text-align:right;padding-right:2.5px;box-sizing:border-box;">170.13</div>
<div class="t" style="left:-5.5px;top:560.45px;width:41px;height:15.73px;line-height:15.73px;text-align:right;padding-right:2.5px;box-sizing:border-box;">-8.89</div>
<div class="t" style="left:35.5px;top:560.45px;width:41.8px;height:15.73px;line-height:15.73px;text-align:right;padding-right:2.5px;box-sizing:border-box;">-2.32</div>
<div class="t" style="left:77.3px;top:560.45px;width:42px;height:15.73px;line-height:15.73px;text-align:right;padding-right:2.5px;box-sizing:border-box;">155.83</div>
<div class="t" style="left:-5.5px;top:576.18px;width:41px;height:15.73px;line-height:15.73px;text-align:right;padding-right:2.5px;box-sizing:border-box;">-7.91</div>
<div class="t" style="left:35.5px;top:576.18px;width:41.8px;height:15.73px;line-height:15.73px;text-align:right;padding-right:2.5px;box-sizing:border-box;">-2.16</div>
<div class="t" style="left:77.3px;top:576.18px;width:42px;height:15.73px;line-height:15.73px;text-align:right;padding-right:2.5px;box-sizing:border-box;">142.79</div>
<div style="left:161.3px;top:464.97px;width:41px;height:15.73px;background:#fdf1bd;"></div>
<div style="left:200px;top:466.97px;width:1px;height:12.23px;background:#444;"></div>
<div style="left:249.1px;top:304.8px;width:294.4px;height:287.01px;background:#d6dbe9;border:1px solid #b4bcd0;box-sizing:border-box;"></div>
<div style="left:250px;top:305.3px;width:292.5px;height:285.51px;background:#fff;"></div>
<div style="left:250px;top:305.3px;width:292.5px;height:18.1px;background:#f3f5fa;"></div>
<div style="left:250px;top:323.4px;width:292.5px;height:15.73px;background:#a7c0e0;"></div>
<div style="left:250px;top:339.13px;width:292.5px;height:15.73px;background:#a7c0e0;"></div>
<div style="left:250px;top:354.86px;width:292.5px;height:15.73px;background:#d3d3d3;"></div>
<div style="left:250px;top:370.59px;width:292.5px;height:15.73px;background:#a7c0e0;"></div>
<div style="left:250px;top:386.32px;width:292.5px;height:15.73px;background:#a7c0e0;"></div>
<div style="left:250px;top:402.05px;width:292.5px;height:15.73px;background:#a7c0e0;"></div>
<div style="left:250px;top:417.78px;width:292.5px;height:15.73px;background:#a7c0e0;"></div>
<div style="left:250px;top:433.51px;width:292.5px;height:15.73px;background:#a7c0e0;"></div>
<div style="left:250px;top:449.24px;width:292.5px;height:15.73px;background:#a7c0e0;"></div>
<div style="left:250px;top:464.97px;width:292.5px;height:15.73px;background:#fffdf0;"></div>
<div style="left:250px;top:480.7px;width:292.5px;height:15.73px;background:#c6e6ee;"></div>
<div style="left:250px;top:496.43px;width:292.5px;height:15.73px;background:#c6e6ee;"></div>
<div style="left:250px;top:512.16px;width:292.5px;height:15.73px;background:#c6e6ee;"></div>
<div style="left:250px;top:527.89px;width:292.5px;height:15.73px;background:#c6e6ee;"></div>
<div style="left:250px;top:543.62px;width:292.5px;height:15.73px;background:#c6e6ee;"></div>
<div style="left:250px;top:559.35px;width:292.5px;height:15.73px;background:#c6e6ee;"></div>
<div style="left:250px;top:575.08px;width:292.5px;height:15.73px;background:#c6e6ee;"></div>
<div style="left:250px;top:322.9px;width:292.5px;height:1px;background:#d6dae8;"></div>
<div style="left:250px;top:338.63px;width:292.5px;height:1px;background:rgba(206,206,226,.7);"></div>
<div style="left:250px;top:354.36px;width:292.5px;height:1px;background:rgba(206,206,226,.7);"></div>
<div style="left:250px;top:370.09px;width:292.5px;height:1px;background:rgba(206,206,226,.7);"></div>
<div style="left:250px;top:385.82px;width:292.5px;height:1px;background:rgba(206,206,226,.7);"></div>
<div style="left:250px;top:401.55px;width:292.5px;height:1px;background:rgba(206,206,226,.7);"></div>
<div style="left:250px;top:417.28px;width:292.5px;height:1px;background:rgba(206,206,226,.7);"></div>
<div style="left:250px;top:433.01px;width:292.5px;height:1px;background:rgba(206,206,226,.7);"></div>
<div style="left:250px;top:448.74px;width:292.5px;height:1px;background:rgba(206,206,226,.7);"></div>
<div style="left:250px;top:464.47px;width:292.5px;height:1px;background:rgba(206,206,226,.7);"></div>
<div style="left:250px;top:480.2px;width:292.5px;height:1px;background:rgba(206,206,226,.7);"></div>
<div style="left:250px;top:495.93px;width:292.5px;height:1px;background:rgba(206,206,226,.7);"></div>
<div style="left:250px;top:511.66px;width:292.5px;height:1px;background:rgba(206,206,226,.7);"></div>
<div style="left:250px;top:527.39px;width:292.5px;height:1px;background:rgba(206,206,226,.7);"></div>
<div style="left:250px;top:543.12px;width:292.5px;height:1px;background:rgba(206,206,226,.7);"></div>
<div style="left:250px;top:558.85px;width:292.5px;height:1px;background:rgba(206,206,226,.7);"></div>
<div style="left:250px;top:574.58px;width:292.5px;height:1px;background:rgba(206,206,226,.7);"></div>
<div style="left:289.3px;top:305.3px;width:1px;height:18.1px;background:#d6dae8;"></div>
<div style="left:289.3px;top:323.4px;width:1px;height:267.41px;background:rgba(206,208,228,.7);"></div>
<div style="left:328.5px;top:305.3px;width:1px;height:18.1px;background:#d6dae8;"></div>
<div style="left:328.5px;top:323.4px;width:1px;height:267.41px;background:rgba(206,208,228,.7);"></div>
<div style="left:368.1px;top:305.3px;width:1px;height:18.1px;background:#d6dae8;"></div>
<div style="left:368.1px;top:323.4px;width:1px;height:267.41px;background:rgba(206,208,228,.7);"></div>
<div style="left:407.8px;top:305.3px;width:1px;height:18.1px;background:#d6dae8;"></div>
<div style="left:407.8px;top:323.4px;width:1px;height:267.41px;background:rgba(206,208,228,.7);"></div>
<div style="left:447.5px;top:305.3px;width:1px;height:18.1px;background:#d6dae8;"></div>
<div style="left:447.5px;top:323.4px;width:1px;height:267.41px;background:rgba(206,208,228,.7);"></div>
<div style="left:487.2px;top:305.3px;width:1px;height:18.1px;background:#d6dae8;"></div>
<div style="left:487.2px;top:323.4px;width:1px;height:267.41px;background:rgba(206,208,228,.7);"></div>
<div style="left:527.3px;top:305.3px;width:1px;height:18.1px;background:#d6dae8;"></div>
<div style="left:527.3px;top:323.4px;width:1px;height:267.41px;background:rgba(206,208,228,.7);"></div>
<div class="t" style="left:250px;top:306px;width:39.8px;height:18.1px;line-height:18.1px;text-align:center;color:#364059;">Mid</div>
<div class="t" style="left:289.8px;top:306px;width:39.2px;height:18.1px;line-height:18.1px;text-align:center;color:#364059;">Delta</div>
<div class="t" style="left:329px;top:306px;width:39.6px;height:18.1px;line-height:18.1px;text-align:center;color:#364059;">Theta</div>
<div class="t" style="left:368.6px;top:306px;width:39.7px;height:18.1px;line-height:18.1px;text-align:center;color:#364059;">Vega</div>
<div class="t" style="left:408.3px;top:306px;width:39.7px;height:18.1px;line-height:18.1px;text-align:center;color:#364059;">OrigP...</div>
<div class="t" style="left:448px;top:306px;width:39.7px;height:18.1px;line-height:18.1px;text-align:center;color:#364059;">Model</div>
<div class="t" style="left:487.7px;top:306px;width:40.1px;height:18.1px;line-height:18.1px;text-align:center;color:#364059;">Pos</div>
<div class="t" style="left:250px;top:324.5px;width:39.8px;height:15.73px;line-height:15.73px;text-align:right;color:#2f9e2f;padding-right:2.5px;box-sizing:border-box;">102.00</div>
<div class="t" style="left:289.8px;top:324.5px;width:39.2px;height:15.73px;line-height:15.73px;text-align:right;padding-right:2.5px;box-sizing:border-box;">-43.62</div>
<div class="t" style="left:329px;top:324.5px;width:39.6px;height:15.73px;line-height:15.73px;text-align:right;padding-right:2.5px;box-sizing:border-box;">-3.98</div>
<div class="t" style="left:368.6px;top:324.5px;width:39.7px;height:15.73px;line-height:15.73px;text-align:right;padding-right:2.5px;box-sizing:border-box;">430.31</div>
<div class="t" style="left:250px;top:340.23px;width:39.8px;height:15.73px;line-height:15.73px;text-align:right;color:#2f9e2f;padding-right:2.5px;box-sizing:border-box;">91.40</div>
<div class="t" style="left:289.8px;top:340.23px;width:39.2px;height:15.73px;line-height:15.73px;text-align:right;padding-right:2.5px;box-sizing:border-box;">-40.41</div>
<div class="t" style="left:329px;top:340.23px;width:39.6px;height:15.73px;line-height:15.73px;text-align:right;padding-right:2.5px;box-sizing:border-box;">-3.95</div>
<div class="t" style="left:368.6px;top:340.23px;width:39.7px;height:15.73px;line-height:15.73px;text-align:right;padding-right:2.5px;box-sizing:border-box;">423.26</div>
<div class="t" style="left:250px;top:355.96px;width:39.8px;height:15.73px;line-height:15.73px;text-align:right;color:#6f9a28;padding-right:2.5px;box-sizing:border-box;">81.65</div>
<div class="t" style="left:289.8px;top:355.96px;width:39.2px;height:15.73px;line-height:15.73px;text-align:right;padding-right:2.5px;box-sizing:border-box;">-37.29</div>
<div class="t" style="left:329px;top:355.96px;width:39.6px;height:15.73px;line-height:15.73px;text-align:right;padding-right:2.5px;box-sizing:border-box;">-3.89</div>
<div class="t" style="left:368.6px;top:355.96px;width:39.7px;height:15.73px;line-height:15.73px;text-align:right;padding-right:2.5px;box-sizing:border-box;">413.58</div>
<div class="t" style="left:250px;top:371.69px;width:39.8px;height:15.73px;line-height:15.73px;text-align:right;color:#2f9e2f;padding-right:2.5px;box-sizing:border-box;">72.70</div>
<div class="t" style="left:289.8px;top:371.69px;width:39.2px;height:15.73px;line-height:15.73px;text-align:right;padding-right:2.5px;box-sizing:border-box;">-34.25</div>
<div class="t" style="left:329px;top:371.69px;width:39.6px;height:15.73px;line-height:15.73px;text-align:right;padding-right:2.5px;box-sizing:border-box;">-3.81</div>
<div class="t" style="left:368.6px;top:371.69px;width:39.7px;height:15.73px;line-height:15.73px;text-align:right;padding-right:2.5px;box-sizing:border-box;">401.49</div>
<div class="t" style="left:250px;top:387.42px;width:39.8px;height:15.73px;line-height:15.73px;text-align:right;color:#2f9e2f;padding-right:2.5px;box-sizing:border-box;">64.60</div>
<div class="t" style="left:289.8px;top:387.42px;width:39.2px;height:15.73px;line-height:15.73px;text-align:right;padding-right:2.5px;box-sizing:border-box;">-31.35</div>
<div class="t" style="left:329px;top:387.42px;width:39.6px;height:15.73px;line-height:15.73px;text-align:right;padding-right:2.5px;box-sizing:border-box;">-3.71</div>
<div class="t" style="left:368.6px;top:387.42px;width:39.7px;height:15.73px;line-height:15.73px;text-align:right;padding-right:2.5px;box-sizing:border-box;">387.34</div>
<div class="t" style="left:250px;top:403.15px;width:39.8px;height:15.73px;line-height:15.73px;text-align:right;color:#2f9e2f;padding-right:2.5px;box-sizing:border-box;">57.20</div>
<div class="t" style="left:289.8px;top:403.15px;width:39.2px;height:15.73px;line-height:15.73px;text-align:right;padding-right:2.5px;box-sizing:border-box;">-28.57</div>
<div class="t" style="left:329px;top:403.15px;width:39.6px;height:15.73px;line-height:15.73px;text-align:right;padding-right:2.5px;box-sizing:border-box;">-3.58</div>
<div class="t" style="left:368.6px;top:403.15px;width:39.7px;height:15.73px;line-height:15.73px;text-align:right;padding-right:2.5px;box-sizing:border-box;">371.36</div>
<div class="t" style="left:250px;top:418.88px;width:39.8px;height:15.73px;line-height:15.73px;text-align:right;color:#2f9e2f;padding-right:2.5px;box-sizing:border-box;">50.55</div>
<div class="t" style="left:289.8px;top:418.88px;width:39.2px;height:15.73px;line-height:15.73px;text-align:right;padding-right:2.5px;box-sizing:border-box;">-25.94</div>
<div class="t" style="left:329px;top:418.88px;width:39.6px;height:15.73px;line-height:15.73px;text-align:right;padding-right:2.5px;box-sizing:border-box;">-3.45</div>
<div class="t" style="left:368.6px;top:418.88px;width:39.7px;height:15.73px;line-height:15.73px;text-align:right;padding-right:2.5px;box-sizing:border-box;">353.98</div>
<div class="t" style="left:250px;top:434.61px;width:39.8px;height:15.73px;line-height:15.73px;text-align:right;color:#2f9e2f;padding-right:2.5px;box-sizing:border-box;">44.50</div>
<div class="t" style="left:289.8px;top:434.61px;width:39.2px;height:15.73px;line-height:15.73px;text-align:right;padding-right:2.5px;box-sizing:border-box;">-23.45</div>
<div class="t" style="left:329px;top:434.61px;width:39.6px;height:15.73px;line-height:15.73px;text-align:right;padding-right:2.5px;box-sizing:border-box;">-3.29</div>
<div class="t" style="left:368.6px;top:434.61px;width:39.7px;height:15.73px;line-height:15.73px;text-align:right;padding-right:2.5px;box-sizing:border-box;">335.40</div>
<div class="t" style="left:250px;top:450.34px;width:39.8px;height:15.73px;line-height:15.73px;text-align:right;color:#2f9e2f;padding-right:2.5px;box-sizing:border-box;">39.15</div>
<div class="t" style="left:289.8px;top:450.34px;width:39.2px;height:15.73px;line-height:15.73px;text-align:right;padding-right:2.5px;box-sizing:border-box;">-21.14</div>
<div class="t" style="left:329px;top:450.34px;width:39.6px;height:15.73px;line-height:15.73px;text-align:right;padding-right:2.5px;box-sizing:border-box;">-3.13</div>
<div class="t" style="left:368.6px;top:450.34px;width:39.7px;height:15.73px;line-height:15.73px;text-align:right;padding-right:2.5px;box-sizing:border-box;">316.17</div>
<div class="t" style="left:250px;top:466.07px;width:39.8px;height:15.73px;line-height:15.73px;text-align:right;color:#6f9a28;padding-right:2.5px;box-sizing:border-box;">34.35</div>
<div class="t" style="left:289.8px;top:466.07px;width:39.2px;height:15.73px;line-height:15.73px;text-align:right;padding-right:2.5px;box-sizing:border-box;">-19.00</div>
<div class="t" style="left:329px;top:466.07px;width:39.6px;height:15.73px;line-height:15.73px;text-align:right;padding-right:2.5px;box-sizing:border-box;">-2.97</div>
<div class="t" style="left:368.6px;top:466.07px;width:39.7px;height:15.73px;line-height:15.73px;text-align:right;padding-right:2.5px;box-sizing:border-box;">296.46</div>
<div class="t" style="left:250px;top:481.8px;width:39.8px;height:15.73px;line-height:15.73px;text-align:right;color:#2f9e2f;padding-right:2.5px;box-sizing:border-box;">30.15</div>
<div class="t" style="left:289.8px;top:481.8px;width:39.2px;height:15.73px;line-height:15.73px;text-align:right;padding-right:2.5px;box-sizing:border-box;">-17.03</div>
<div class="t" style="left:329px;top:481.8px;width:39.6px;height:15.73px;line-height:15.73px;text-align:right;padding-right:2.5px;box-sizing:border-box;">-2.80</div>
<div class="t" style="left:368.6px;top:481.8px;width:39.7px;height:15.73px;line-height:15.73px;text-align:right;padding-right:2.5px;box-sizing:border-box;">276.82</div>
<div class="t" style="left:250px;top:497.53px;width:39.8px;height:15.73px;line-height:15.73px;text-align:right;color:#2f9e2f;padding-right:2.5px;box-sizing:border-box;">26.40</div>
<div class="t" style="left:289.8px;top:497.53px;width:39.2px;height:15.73px;line-height:15.73px;text-align:right;padding-right:2.5px;box-sizing:border-box;">-15.22</div>
<div class="t" style="left:329px;top:497.53px;width:39.6px;height:15.73px;line-height:15.73px;text-align:right;padding-right:2.5px;box-sizing:border-box;">-2.63</div>
<div class="t" style="left:368.6px;top:497.53px;width:39.7px;height:15.73px;line-height:15.73px;text-align:right;padding-right:2.5px;box-sizing:border-box;">257.26</div>
<div class="t" style="left:250px;top:513.26px;width:39.8px;height:15.73px;line-height:15.73px;text-align:right;color:#2f9e2f;padding-right:2.5px;box-sizing:border-box;">23.20</div>
<div class="t" style="left:289.8px;top:513.26px;width:39.2px;height:15.73px;line-height:15.73px;text-align:right;padding-right:2.5px;box-sizing:border-box;">-13.61</div>
<div class="t" style="left:329px;top:513.26px;width:39.6px;height:15.73px;line-height:15.73px;text-align:right;padding-right:2.5px;box-sizing:border-box;">-2.46</div>
<div class="t" style="left:368.6px;top:513.26px;width:39.7px;height:15.73px;line-height:15.73px;text-align:right;padding-right:2.5px;box-sizing:border-box;">238.51</div>
<div class="t" style="left:250px;top:528.99px;width:39.8px;height:15.73px;line-height:15.73px;text-align:right;color:#2f9e2f;padding-right:2.5px;box-sizing:border-box;">20.35</div>
<div class="t" style="left:289.8px;top:528.99px;width:39.2px;height:15.73px;line-height:15.73px;text-align:right;padding-right:2.5px;box-sizing:border-box;">-12.13</div>
<div class="t" style="left:329px;top:528.99px;width:39.6px;height:15.73px;line-height:15.73px;text-align:right;padding-right:2.5px;box-sizing:border-box;">-2.30</div>
<div class="t" style="left:368.6px;top:528.99px;width:39.7px;height:15.73px;line-height:15.73px;text-align:right;padding-right:2.5px;box-sizing:border-box;">220.26</div>
<div class="t" style="left:250px;top:544.72px;width:39.8px;height:15.73px;line-height:15.73px;text-align:right;color:#2f9e2f;padding-right:2.5px;box-sizing:border-box;">17.90</div>
<div class="t" style="left:289.8px;top:544.72px;width:39.2px;height:15.73px;line-height:15.73px;text-align:right;padding-right:2.5px;box-sizing:border-box;">-10.82</div>
<div class="t" style="left:329px;top:544.72px;width:39.6px;height:15.73px;line-height:15.73px;text-align:right;padding-right:2.5px;box-sizing:border-box;">-2.15</div>
<div class="t" style="left:368.6px;top:544.72px;width:39.7px;height:15.73px;line-height:15.73px;text-align:right;padding-right:2.5px;box-sizing:border-box;">203.04</div>
<div class="t" style="left:250px;top:576.18px;width:39.8px;height:15.73px;line-height:15.73px;text-align:right;color:#e8262a;padding-right:2.5px;box-sizing:border-box;">14.00</div>
<div class="t" style="left:289.8px;top:576.18px;width:39.2px;height:15.73px;line-height:15.73px;text-align:right;padding-right:2.5px;box-sizing:border-box;">-8.64</div>
<div class="t" style="left:329px;top:576.18px;width:39.6px;height:15.73px;line-height:15.73px;text-align:right;padding-right:2.5px;box-sizing:border-box;">-1.87</div>
<div class="t" style="left:368.6px;top:576.18px;width:39.7px;height:15.73px;line-height:15.73px;text-align:right;padding-right:2.5px;box-sizing:border-box;">172.05</div>
<div style="left:528.3px;top:323.4px;width:14.3px;height:267.41px;background:#d6dbe9;"></div>
<div class="up" style="left:532.6px;top:329.5px"></div>
<div style="left:530.8px;top:445.5px;width:9px;height:16.7px;background:#a3aabd;"></div>
<div class="dn" style="left:532.6px;top:583px"></div>
<svg class="a" style="left:547px;top:399.4px" width="4" height="13" viewBox="0 0 4 13"><path d="M.4 0.3l3.2 2.8M.4 3.1l3.2-2.8M.4 3.4l3.2 2.8M.4 6.2l3.2-2.8M.4 6.5l3.2 2.8M.4 9.3l3.2-2.8M.4 9.6l3.2 2.8M.4 12.4l3.2-2.8" stroke="#a9b0c6" stroke-width=".7" fill="none"/></svg>
<div style="left:542.6px;top:208.7px;width:1px;height:85.5px;background:#b4bcd0;"></div>
<div style="left:542.6px;top:305.3px;width:1px;height:286.51px;background:#b4bcd0;"></div>
<div style="left:-30px;top:604px;width:129.6px;height:15.8px;background:#fff;border:1px solid #b4bcd0;box-sizing:border-box;"></div>
<div class="t" style="left:-40px;top:604.8px;width:59.5px;height:15.6px;line-height:15.6px;text-align:right;">Combined</div>
<div class="arr" style="left:90px;top:610.5px"></div>
<div style="left:107px;top:604px;width:67.7px;height:15.6px;background:#fff;border:1px solid #b4bcd0;box-sizing:border-box;"></div>
<div class="t" style="left:110.5px;top:604.8px;width:40px;height:15.6px;line-height:15.6px;text-align:left;">Auto</div>
<div class="arr" style="left:165.5px;top:610.5px"></div>
<div style="left:418px;top:603px;width:125.5px;height:20.6px;background:#dbdfeb;"></div>
<div style="left:426px;top:606.8px;width:8.8px;height:8.8px;background:#fff;border:1px solid #bcc3d3;box-sizing:border-box;"></div>
<div class="t" style="left:438.5px;top:604.6px;width:110px;height:15.6px;line-height:15.6px;text-align:left;letter-spacing:0.40px;">Ignore Today's Trades</div>
<div style="left:-7px;top:623.8px;width:550px;height:48.8px;background:#fff;"></div>
<div style="left:-7px;top:623.8px;width:550px;height:17.1px;background:#f3f5fa;"></div>
<div style="left:-7px;top:640.4px;width:550px;height:1px;background:#d6dae8;"></div>
<div style="left:-7px;top:656.2px;width:550px;height:1px;background:#d6dae8;"></div>
<div style="left:41.5px;top:623.8px;width:1px;height:17.1px;background:#d6dae8;"></div>
<div style="left:41.5px;top:640.9px;width:1px;height:31.7px;background:#d6dae8;"></div>
<div style="left:90.8px;top:623.8px;width:1px;height:17.1px;background:#d6dae8;"></div>
<div style="left:90.8px;top:640.9px;width:1px;height:31.7px;background:#d6dae8;"></div>
<div style="left:140.1px;top:623.8px;width:1px;height:17.1px;background:#d6dae8;"></div>
<div style="left:140.1px;top:640.9px;width:1px;height:31.7px;background:#d6dae8;"></div>
<div style="left:189.5px;top:623.8px;width:1px;height:17.1px;background:#d6dae8;"></div>
<div style="left:189.5px;top:640.9px;width:1px;height:31.7px;background:#d6dae8;"></div>
<div style="left:238.8px;top:623.8px;width:1px;height:17.1px;background:#d6dae8;"></div>
<div style="left:238.8px;top:640.9px;width:1px;height:31.7px;background:#d6dae8;"></div>
<div style="left:288.9px;top:623.8px;width:1px;height:17.1px;background:#d6dae8;"></div>
<div style="left:288.9px;top:640.9px;width:1px;height:31.7px;background:#d6dae8;"></div>
<div style="left:338.2px;top:623.8px;width:1px;height:17.1px;background:#d6dae8;"></div>
<div style="left:338.2px;top:640.9px;width:1px;height:31.7px;background:#d6dae8;"></div>
<div style="left:387.5px;top:623.8px;width:1px;height:17.1px;background:#d6dae8;"></div>
<div style="left:387.5px;top:640.9px;width:1px;height:31.7px;background:#d6dae8;"></div>
<div style="left:436.7px;top:623.8px;width:1px;height:17.1px;background:#d6dae8;"></div>
<div style="left:436.7px;top:640.9px;width:1px;height:31.7px;background:#d6dae8;"></div>
<div style="left:486px;top:623.8px;width:1px;height:17.1px;background:#d6dae8;"></div>
<div style="left:486px;top:640.9px;width:1px;height:31.7px;background:#d6dae8;"></div>
<div class="t" style="left:-7px;top:623.5px;width:49px;height:17.1px;line-height:17.1px;text-align:center;color:#364059;">Cost</div>
<div class="t" style="left:42px;top:623.5px;width:49.3px;height:17.1px;line-height:17.1px;text-align:center;color:#364059;">Curr Cost</div>
<div class="t" style="left:91.3px;top:623.5px;width:49.3px;height:17.1px;line-height:17.1px;text-align:center;color:#364059;">Commi...</div>
<div class="t" style="left:140.6px;top:623.5px;width:49.4px;height:17.1px;line-height:17.1px;text-align:center;color:#364059;">PnL</div>
<div class="t" style="left:190px;top:623.5px;width:49.3px;height:17.1px;line-height:17.1px;text-align:center;color:#364059;">PnL%</div>
<div class="t" style="left:239.3px;top:623.5px;width:50.1px;height:17.1px;line-height:17.1px;text-align:center;color:#364059;">Delta</div>
<div class="t" style="left:289.4px;top:623.5px;width:49.3px;height:17.1px;line-height:17.1px;text-align:center;color:#364059;">Gamma</div>
<div class="t" style="left:338.7px;top:623.5px;width:49.3px;height:17.1px;line-height:17.1px;text-align:center;color:#364059;">Theta</div>
<div class="t" style="left:388px;top:623.5px;width:49.2px;height:17.1px;line-height:17.1px;text-align:center;color:#364059;">Vega</div>
<div class="t" style="left:437.2px;top:623.5px;width:49.3px;height:17.1px;line-height:17.1px;text-align:center;color:#364059;">T/D</div>
<div class="t" style="left:486.5px;top:623.5px;width:56.5px;height:17.1px;line-height:17.1px;text-align:center;color:#364059;">Plot</div>
<div class="t" style="left:-7px;top:642px;width:49px;height:15.8px;line-height:15.8px;text-align:right;padding-right:2.5px;box-sizing:border-box;">-28,348....</div>
<div class="t" style="left:42px;top:642px;width:49.3px;height:15.8px;line-height:15.8px;text-align:right;padding-right:2.5px;box-sizing:border-box;">-34,807...</div>
<div class="t" style="left:91.3px;top:642px;width:49.3px;height:15.8px;line-height:15.8px;text-align:right;padding-right:2.5px;box-sizing:border-box;">39.90</div>
<div class="t" style="left:140.6px;top:642px;width:49.4px;height:15.8px;line-height:15.8px;text-align:right;color:#e8262a;padding-right:2.5px;box-sizing:border-box;">-6,458.55</div>
<div class="t" style="left:190px;top:642px;width:49.3px;height:15.8px;line-height:15.8px;text-align:right;color:#e8262a;padding-right:2.5px;box-sizing:border-box;">-12.92%</div>
<div class="t" style="left:239.3px;top:642px;width:50.1px;height:15.8px;line-height:15.8px;text-align:right;padding-right:2.5px;box-sizing:border-box;">29.03</div>
<div class="t" style="left:289.4px;top:642px;width:49.3px;height:15.8px;line-height:15.8px;text-align:right;padding-right:2.5px;box-sizing:border-box;">-0.12</div>
<div class="t" style="left:338.7px;top:642px;width:49.3px;height:15.8px;line-height:15.8px;text-align:right;padding-right:2.5px;box-sizing:border-box;">468.94</div>
<div class="t" style="left:388px;top:642px;width:49.2px;height:15.8px;line-height:15.8px;text-align:right;padding-right:2.5px;box-sizing:border-box;">-353.71</div>
<div class="t" style="left:437.2px;top:642px;width:49.3px;height:15.8px;line-height:15.8px;text-align:right;padding-right:2.5px;box-sizing:border-box;">16.2</div>
<div class="t" style="left:-7px;top:657.8px;width:49px;height:15.9px;line-height:15.9px;text-align:right;padding-right:2.5px;box-sizing:border-box;">-25,027....</div>
<div class="t" style="left:42px;top:657.8px;width:49.3px;height:15.9px;line-height:15.9px;text-align:right;padding-right:2.5px;box-sizing:border-box;">-31,487...</div>
<div class="t" style="left:91.3px;top:657.8px;width:49.3px;height:15.9px;line-height:15.9px;text-align:right;padding-right:2.5px;box-sizing:border-box;">41.30</div>
<div class="t" style="left:140.6px;top:657.8px;width:49.4px;height:15.9px;line-height:15.9px;text-align:right;color:#e8262a;padding-right:2.5px;box-sizing:border-box;">-6,459.95</div>
<div class="t" style="left:190px;top:657.8px;width:49.3px;height:15.9px;line-height:15.9px;text-align:right;color:#e8262a;padding-right:2.5px;box-sizing:border-box;">-81.99%</div>
<div class="t" style="left:239.3px;top:657.8px;width:50.1px;height:15.9px;line-height:15.9px;text-align:right;padding-right:2.5px;box-sizing:border-box;">15.46</div>
<div class="t" style="left:289.4px;top:657.8px;width:49.3px;height:15.9px;line-height:15.9px;text-align:right;padding-right:2.5px;box-sizing:border-box;">-0.09</div>
<div class="t" style="left:338.7px;top:657.8px;width:49.3px;height:15.9px;line-height:15.9px;text-align:right;padding-right:2.5px;box-sizing:border-box;">377.10</div>
<div class="t" style="left:388px;top:657.8px;width:49.2px;height:15.9px;line-height:15.9px;text-align:right;padding-right:2.5px;box-sizing:border-box;">-273.43</div>
<div class="t" style="left:437.2px;top:657.8px;width:49.3px;height:15.9px;line-height:15.9px;text-align:right;padding-right:2.5px;box-sizing:border-box;">24.4</div>
<svg class="a" style="left:510.5px;top:644.6px" width="9" height="9" viewBox="0 0 9 9"><rect x=".5" y=".5" width="8" height="8" fill="#fff" stroke="#a8b0c4"/><path d="M2 4.5l1.8 2L7 2.4" fill="none" stroke="#6b7384" stroke-width="1"/></svg>
<svg class="a" style="left:510.5px;top:660.45px" width="9" height="9" viewBox="0 0 9 9"><rect x=".5" y=".5" width="8" height="8" fill="#fff" stroke="#a8b0c4"/><path d="M2 4.5l1.8 2L7 2.4" fill="none" stroke="#6b7384" stroke-width="1"/></svg>
<div style="left:-7px;top:623.8px;width:550.5px;height:49.3px;border:1px solid #b4bcd0;box-sizing:border-box;"></div>
<div style="left:0px;top:673px;width:555px;height:3px;background:#bdc4d5;"></div>
<div style="left:555px;top:136.2px;width:525px;height:45px;background:#d6dbe9;"></div>
<div style="left:554px;top:160px;width:1px;height:492px;background:#bcc3d4;"></div>
<div style="left:554.8px;top:180.9px;width:526px;height:470.9px;background:#fff;"></div>
<div style="left:618.8px;top:159px;width:462px;height:1px;background:#b2b9cc;"></div>
<div style="left:554.2px;top:137px;width:64.6px;height:23px;background:#d6dbe9;border:1px solid #b2b9cc;border-bottom:none;box-sizing:border-box;"></div>
<div class="t" style="left:554.2px;top:141.5px;width:64.6px;height:14px;line-height:14px;text-align:center;">Risk Chart</div>
<div style="left:617.8px;top:137px;width:67.7px;height:23px;background:#d1d7e6;border:1px solid #b2b9cc;box-sizing:border-box;"></div>
<div class="t" style="left:618.8px;top:141.5px;width:66.7px;height:14px;line-height:14px;text-align:center;">Price Chart</div>
<div style="left:684.5px;top:137px;width:107px;height:23px;background:#d1d7e6;border:1px solid #b2b9cc;box-sizing:border-box;"></div>
<div class="t" style="left:685.5px;top:141.5px;width:106px;height:14px;line-height:14px;text-align:center;">Movement Analysis</div>
<div style="left:790.5px;top:137px;width:54.5px;height:23px;background:#d1d7e6;border:1px solid #b2b9cc;box-sizing:border-box;"></div>
<div class="t" style="left:791.5px;top:141.5px;width:53.5px;height:14px;line-height:14px;text-align:center;">Volatility</div>
<div style="left:844px;top:137px;width:134px;height:23px;background:#d1d7e6;border:1px solid #b2b9cc;box-sizing:border-box;"></div>
<div class="t" style="left:845px;top:141.5px;width:133px;height:14px;line-height:14px;text-align:center;">Statistics &amp; Fundamentals</div>
<div class="t" style="left:560px;top:165px;width:50px;height:14px;line-height:14px;text-align:left;letter-spacing:0.09px;">Vol Adjust</div>
<div style="left:608.3px;top:162.6px;width:45.2px;height:16px;background:#fff;border:1px solid #b4bccf;box-sizing:border-box;"></div>
<div class="t" style="left:610px;top:164.1px;width:27px;height:14px;line-height:14px;text-align:right;">0</div>
<div class="up" style="left:643.6px;top:165.8px;border-width:0 2.7px 3px 2.7px;border-bottom-color:#3a3f4c"></div>
<div class="dn" style="left:643.6px;top:172.6px;border-width:3px 2.7px 0 2.7px;border-top-color:#3a3f4c"></div>
<div class="t" style="left:984.8px;top:165px;width:45px;height:14px;line-height:14px;text-align:left;letter-spacing:-0.20px;">Projection</div>
<div style="left:1031.5px;top:162.5px;width:60px;height:16px;background:#fff;border:1px solid #b4bccf;box-sizing:border-box;"></div>
<div class="t" style="left:1034px;top:164.1px;width:60px;height:14px;line-height:14px;text-align:left;">31/03/2025</div>
<svg class="a" style="left:0;top:0" width="1080" height="675" viewBox="0 0 1080 675"><defs><clipPath id="pc"><rect x="602.7" y="196.7" width="477.29999999999995" height="275.90000000000003"/></clipPath></defs><rect x="751.3" y="196.7" width="243.4" height="275.9" fill="#90cbdc"/><rect x="812.6" y="196.7" width="121.9" height="275.9" fill="#4e81bd"/><path d="M651.4 194.29999999999998V475.0M712.9 194.29999999999998V475.0M774.3 194.29999999999998V475.0M835.8 194.29999999999998V475.0M897.2 194.29999999999998V475.0M958.6 194.29999999999998V475.0M1020.1 194.29999999999998V475.0M1081.5 194.29999999999998V475.0M599.7 197.0H1080M599.7 224.6H1080M599.7 252.2H1080M599.7 279.8H1080M599.7 307.3H1080M599.7 334.9H1080M599.7 362.5H1080M599.7 390.1H1080M599.7 417.7H1080M599.7 445.2H1080M599.7 472.8H1080" stroke="rgba(212,212,212,.68)" stroke-width="1" fill="none"/><path d="M602.7 196.7V472.6" stroke="#d8d8d8" stroke-width="1" fill="none"/><path d="M603 224.3H1080" stroke="#1c2230" stroke-width="1"/><g clip-path="url(#pc)" fill="none"><path d="M602.7 248.4L1080 275.5" stroke="#0a8a14" stroke-width="1.6"/><path d="M602.7 359.6L743.3 210.4L840 216.5L1080 230.2" stroke="#3d3bcb" stroke-width="1.3"/><path d="M864.4 316.2C871.2 314.2 892.1 307.8 905.0 304.0C917.9 300.2 925.9 297.2 942.0 293.3C958.1 289.4 991.8 283.0 1001.8 280.9" stroke="rgba(242,170,130,.72)" stroke-width="5.2" stroke-linecap="butt"/><path d="M602.7 347.3C605.9 346.0 615.0 342.3 622.0 339.5C629.0 336.7 633.2 334.8 644.4 330.5C655.6 326.2 671.2 318.9 689.0 313.5C706.8 308.1 730.3 302.5 751.0 298.0C771.7 293.5 798.2 289.1 813.0 286.5C827.8 283.9 826.0 283.7 840.0 282.5C854.0 281.3 881.1 280.1 897.0 279.3C912.9 278.5 924.4 278.0 935.6 277.5C946.8 277.0 954.5 276.6 964.4 276.4C974.3 276.2 982.4 276.1 995.0 276.2C1007.6 276.3 1025.8 276.7 1040.0 277.0C1054.2 277.3 1073.3 278.0 1080.0 278.2" stroke="#ee5a5e" stroke-width=".9"/><path d="M602.7 402.9C610.8 397.8 634.8 382.5 651.0 372.2C667.2 361.9 683.3 350.5 700.0 341.0C716.7 331.5 732.2 323.9 751.0 315.0C769.8 306.1 798.2 293.7 813.0 287.5C827.8 281.3 828.1 281.7 840.0 278.0C851.9 274.3 868.5 269.0 884.4 265.1C900.3 261.2 917.1 257.6 935.6 254.4C954.1 251.2 978.2 248.0 995.6 246.0C1013.0 244.0 1025.9 243.5 1040.0 242.6C1054.1 241.7 1073.3 241.0 1080.0 240.7" stroke="#ee5a5e" stroke-width=".9"/><path d="M602.7 396.7C610.8 393.2 632.8 382.8 651.0 375.6C669.2 368.4 695.3 359.1 712.0 353.3C728.7 347.5 737.5 344.6 751.0 340.7C764.5 336.8 782.7 332.6 793.0 330.0C803.3 327.4 805.2 327.0 813.0 325.0C820.8 323.0 830.0 320.0 840.0 318.0C850.0 316.0 857.4 315.1 873.3 312.9C889.2 310.7 915.3 307.4 935.6 304.9C955.9 302.4 974.5 299.7 995.0 297.8C1015.5 295.9 1048.2 294.1 1058.9 293.3" stroke="#e8383c" stroke-width=".95"/><path d="M602.7 445.6C608.9 441.7 625.6 431.1 640.0 422.2C654.4 413.3 670.5 402.3 689.0 392.2C707.5 382.1 730.5 371.3 751.0 361.8C771.5 352.3 797.2 341.3 812.0 335.0C826.8 328.7 829.8 327.7 840.0 324.0C850.2 320.3 856.3 318.0 873.3 312.9C890.3 307.8 930.5 296.6 942.0 293.3" stroke="#e8383c" stroke-width=".95"/><path d="M1058.9 293.3C1062.4 293.1 1076.5 292.4 1080.0 292.2" stroke="#7fdc7f" stroke-width=".9"/><path d="M942.0 293.3C951.7 291.3 977.0 285.6 1000.0 281.2C1023.0 276.8 1066.7 269.5 1080.0 267.1" stroke="#8aa8ee" stroke-width=".9"/></g><circle cx="873.3" cy="312.9" r="2.6" fill="#f00" stroke="#5a0000" stroke-width=".7"/><text transform="translate(760.8 231.5) rotate(-90)" font-size="8.7" fill="#5b93cc">5482.12</text><text transform="translate(821.6 231.5) rotate(-90)" font-size="8.7" fill="#9dc0e6">5531.53</text><text transform="translate(933.5 231.5) rotate(-90)" font-size="8.7" fill="#8fb6e2">5630.35</text><text transform="translate(994.2 231.5) rotate(-90)" font-size="8.7" fill="#5b93cc">5679.76</text></svg>
<div class="c" style="left:560px;top:191.32px;width:36.8px;height:13px;line-height:13px;text-align:right;color:#333;">4%</div>
<div class="c" style="left:560px;top:218.9px;width:36.8px;height:13px;line-height:13px;text-align:right;color:#333;">0%</div>
<div class="c" style="left:560px;top:246.48px;width:36.8px;height:13px;line-height:13px;text-align:right;color:#333;">-4%</div>
<div class="c" style="left:560px;top:274.06px;width:36.8px;height:13px;line-height:13px;text-align:right;color:#333;">-8%</div>
<div class="c" style="left:560px;top:329.22px;width:36.8px;height:13px;line-height:13px;text-align:right;color:#333;">-16%</div>
<div class="c" style="left:560px;top:356.8px;width:36.8px;height:13px;line-height:13px;text-align:right;color:#333;">-20%</div>
<div class="c" style="left:560px;top:384.38px;width:36.8px;height:13px;line-height:13px;text-align:right;color:#333;">-24%</div>
<div class="c" style="left:560px;top:411.96px;width:36.8px;height:13px;line-height:13px;text-align:right;color:#333;">-28%</div>
<div class="c" style="left:560px;top:439.54px;width:36.8px;height:13px;line-height:13px;text-align:right;color:#333;">-32%</div>
<div class="c" style="left:560px;top:467.12px;width:36.8px;height:13px;line-height:13px;text-align:right;color:#333;">-36%</div>
<div class="c" style="left:560px;top:300.44px;width:36.8px;height:13px;line-height:13px;text-align:right;color:#333;">-12%</div>
<div style="left:561px;top:306.9px;width:38px;height:10.8px;background:#c80000;"></div>
<div class="c" style="left:561px;top:306.9px;width:36px;height:12px;line-height:12px;text-align:right;color:#fff;">-13%</div>
<div class="c" style="left:631.4px;top:182.9px;width:40px;height:13px;line-height:13px;text-align:center;color:#333;">-3.2%</div>
<div class="c" style="left:631.4px;top:475.9px;width:40px;height:13px;line-height:13px;text-align:center;color:#333;">5400</div>
<div class="c" style="left:692.85px;top:182.9px;width:40px;height:13px;line-height:13px;text-align:center;color:#333;">-2.3%</div>
<div class="c" style="left:692.85px;top:475.9px;width:40px;height:13px;line-height:13px;text-align:center;color:#333;">5450</div>
<div class="c" style="left:754.3px;top:182.9px;width:40px;height:13px;line-height:13px;text-align:center;color:#333;">-1.5%</div>
<div class="c" style="left:754.3px;top:475.9px;width:40px;height:13px;line-height:13px;text-align:center;color:#333;">5500</div>
<div class="c" style="left:815.75px;top:182.9px;width:40px;height:13px;line-height:13px;text-align:center;color:#333;">-0.6%</div>
<div class="c" style="left:815.75px;top:475.9px;width:40px;height:13px;line-height:13px;text-align:center;color:#333;">5550</div>
<div class="c" style="left:877.2px;top:182.9px;width:40px;height:13px;line-height:13px;text-align:center;color:#333;">0.3%</div>
<div class="c" style="left:877.2px;top:475.9px;width:40px;height:13px;line-height:13px;text-align:center;color:#333;">5600</div>
<div class="c" style="left:938.65px;top:182.9px;width:40px;height:13px;line-height:13px;text-align:center;color:#333;">1.2%</div>
<div class="c" style="left:938.65px;top:475.9px;width:40px;height:13px;line-height:13px;text-align:center;color:#333;">5650</div>
<div class="c" style="left:1000.1px;top:182.9px;width:40px;height:13px;line-height:13px;text-align:center;color:#333;">2.1%</div>
<div class="c" style="left:1000.1px;top:475.9px;width:40px;height:13px;line-height:13px;text-align:center;color:#333;">5700</div>
<div class="c" style="left:1061.55px;top:182.9px;width:40px;height:13px;line-height:13px;text-align:center;color:#333;">3.0%</div>
<div class="c" style="left:1061.55px;top:475.9px;width:40px;height:13px;line-height:13px;text-align:center;color:#333;">5750</div>
<div style="left:861.1px;top:181.3px;width:25.2px;height:11.2px;background:#e9eff8;border:1px solid #7f8ea8;box-sizing:border-box;"></div>
<div class="c" style="left:861.1px;top:181.2px;width:25.2px;height:13px;line-height:13px;text-align:center;color:#333;">0.0%</div>
<div style="left:606.2px;top:201.1px;width:137.4px;height:93.6px;background:rgba(236,241,250,.8);border:1px solid #8c9bb3;border-radius:3.5px;box-sizing:border-box;"></div>
<div style="left:613px;top:208.7px;width:2.8px;height:9.3px;background:#f25252;"></div>
<div class="c" style="left:616.2px;top:207.7px;width:100px;height:13px;line-height:13px;text-align:left;color:#4c4c4c;letter-spacing:-0.05px;">-3,744.90 Realized PnL</div>
<div style="left:613px;top:220.42px;width:2.8px;height:9.3px;background:#62d062;"></div>
<div class="c" style="left:616.2px;top:219.42px;width:100px;height:13px;line-height:13px;text-align:left;color:#4c4c4c;">+1</div>
<div class="c" style="left:629.6px;top:219.42px;width:90px;height:13px;line-height:13px;text-align:left;color:#4c4ce6;letter-spacing:0.05px;">11abr. 5475 Put Δ</div>
<div class="c" style="left:695.1px;top:219.42px;width:40px;height:13px;line-height:13px;text-align:right;color:#4c4ce6;">-33.99</div>
<div style="left:613px;top:232.14px;width:2.8px;height:9.3px;background:#62d062;"></div>
<div class="c" style="left:616.2px;top:231.14px;width:100px;height:13px;line-height:13px;text-align:left;color:#4c4c4c;">-1</div>
<div class="c" style="left:626.7px;top:231.14px;width:90px;height:13px;line-height:13px;text-align:left;color:#e8585c;letter-spacing:0.06px;">11abr. 5350 Put Δ</div>
<div class="c" style="left:692.7px;top:231.14px;width:40px;height:13px;line-height:13px;text-align:right;color:#e8585c;">-20.42</div>
<div style="left:613px;top:243.86px;width:2.8px;height:9.3px;background:#86a6f0;"></div>
<div class="c" style="left:616.2px;top:242.86px;width:100px;height:13px;line-height:13px;text-align:left;color:#4c4c4c;">-5</div>
<div class="c" style="left:626.7px;top:242.86px;width:90px;height:13px;line-height:13px;text-align:left;color:#e8585c;letter-spacing:0.18px;">SPX Stock</div>
<div style="left:613px;top:255.18px;width:2.8px;height:9.3px;background:#86a6f0;"></div>
<div class="c" style="left:616.2px;top:254.18px;width:100px;height:13px;line-height:13px;text-align:left;color:#4c4c4c;">+1</div>
<div class="c" style="left:629.6px;top:254.18px;width:90px;height:13px;line-height:13px;text-align:left;color:#4c4ce6;letter-spacing:0.03px;">11abr. 6450 Call Δ</div>
<div class="c" style="left:696.7px;top:254.18px;width:40px;height:13px;line-height:13px;text-align:right;color:#4c4ce6;">0.16</div>
<div style="left:613px;top:267.3px;width:2.8px;height:9.3px;background:#86a6f0;"></div>
<div class="c" style="left:616.2px;top:266.3px;width:100px;height:13px;line-height:13px;text-align:left;color:#4c4c4c;">-1</div>
<div class="c" style="left:626.7px;top:266.3px;width:90px;height:13px;line-height:13px;text-align:left;color:#e8585c;letter-spacing:0.04px;">11abr. 6550 Call Δ</div>
<div class="c" style="left:694px;top:266.3px;width:40px;height:13px;line-height:13px;text-align:right;color:#e8585c;">0.12</div>
<div style="left:613px;top:278.62px;width:2.8px;height:9.3px;background:#86a6f0;"></div>
<div class="c" style="left:616.2px;top:277.62px;width:100px;height:13px;line-height:13px;text-align:left;color:#4c4c4c;">-1</div>
<div class="c" style="left:626.7px;top:277.62px;width:90px;height:13px;line-height:13px;text-align:left;color:#e8585c;letter-spacing:0.06px;">11abr. 5475 Put Δ</div>
<div class="c" style="left:692.7px;top:277.62px;width:40px;height:13px;line-height:13px;text-align:right;color:#e8585c;">-33.99</div>
<div style="left:606.4px;top:421.6px;width:92.3px;height:47.1px;background:rgba(236,241,250,.82);border:1px solid #8c9bb3;border-radius:3.5px;box-sizing:border-box;"></div>
<div class="c" style="left:613.8px;top:428.3px;width:90px;height:13px;line-height:13px;text-align:left;color:#4c9c4c;">11/04/2025 (0)</div>
<div class="c" style="left:613.8px;top:439.95px;width:90px;height:13px;line-height:13px;text-align:left;color:#f08286;">06/04/2025 (5) T+6</div>
<div class="c" style="left:613.8px;top:451.6px;width:90px;height:13px;line-height:13px;text-align:left;color:#72d272;">31/03/2025 (11) T+0</div>
<div style="left:558.4px;top:491.2px;width:540px;height:157.4px;background:#e9f0f8;border:1px solid #7d8ea8;border-radius:3.5px;box-sizing:border-box;"></div>
<div class="c" style="left:560px;top:509.2px;width:41px;height:13px;line-height:13px;text-align:center;color:#666;">PnL</div>
<div class="c" style="left:560px;top:545.7px;width:41px;height:13px;line-height:13px;text-align:center;color:#666;">Delta</div>
<div class="c" style="left:560px;top:573px;width:41px;height:13px;line-height:13px;text-align:center;color:#666;">Gamma</div>
<div class="c" style="left:560px;top:599.7px;width:41px;height:13px;line-height:13px;text-align:center;color:#666;">Theta</div>
<div class="c" style="left:560px;top:627.5px;width:41px;height:13px;line-height:13px;text-align:center;color:#666;">Vega</div>
<div class="c" style="left:626.4px;top:493.8px;width:50px;height:13px;line-height:13px;text-align:center;color:#f07478;">-22%</div>
<div class="c" style="left:626.4px;top:504.1px;width:50px;height:13px;line-height:13px;text-align:center;color:#f07478;">-11024</div>
<div class="c" style="left:626.4px;top:568.5px;width:50px;height:13px;line-height:13px;text-align:center;color:#f07478;">-0.13</div>
<div class="c" style="left:626.4px;top:623.1px;width:50px;height:13px;line-height:13px;text-align:center;color:#f07478;">-364.64</div>
<div class="c" style="left:626.4px;top:549.9px;width:50px;height:13px;line-height:13px;text-align:center;color:#7676f2;">36.19</div>
<div class="c" style="left:626.4px;top:605px;width:50px;height:13px;line-height:13px;text-align:center;color:#7676f2;">493.01</div>
<div class="c" style="left:687.85px;top:493.8px;width:50px;height:13px;line-height:13px;text-align:center;color:#f07478;">-19%</div>
<div class="c" style="left:687.85px;top:504.1px;width:50px;height:13px;line-height:13px;text-align:center;color:#f07478;">-9376</div>
<div class="c" style="left:687.85px;top:568.5px;width:50px;height:13px;line-height:13px;text-align:center;color:#f07478;">-0.12</div>
<div class="c" style="left:687.85px;top:623.1px;width:50px;height:13px;line-height:13px;text-align:center;color:#f07478;">-349.32</div>
<div class="c" style="left:687.85px;top:549.9px;width:50px;height:13px;line-height:13px;text-align:center;color:#7676f2;">29.78</div>
<div class="c" style="left:687.85px;top:605px;width:50px;height:13px;line-height:13px;text-align:center;color:#7676f2;">475.44</div>
<div class="c" style="left:749.3px;top:493.8px;width:50px;height:13px;line-height:13px;text-align:center;color:#f07478;">-16%</div>
<div class="c" style="left:749.3px;top:504.1px;width:50px;height:13px;line-height:13px;text-align:center;color:#f07478;">-8038</div>
<div class="c" style="left:749.3px;top:568.5px;width:50px;height:13px;line-height:13px;text-align:center;color:#f07478;">-0.11</div>
<div class="c" style="left:749.3px;top:623.1px;width:50px;height:13px;line-height:13px;text-align:center;color:#f07478;">-325.36</div>
<div class="c" style="left:749.3px;top:549.9px;width:50px;height:13px;line-height:13px;text-align:center;color:#7676f2;">23.82</div>
<div class="c" style="left:749.3px;top:605px;width:50px;height:13px;line-height:13px;text-align:center;color:#7676f2;">445.30</div>
<div class="c" style="left:810.75px;top:493.8px;width:50px;height:13px;line-height:13px;text-align:center;color:#f07478;">-14%</div>
<div class="c" style="left:810.75px;top:504.1px;width:50px;height:13px;line-height:13px;text-align:center;color:#f07478;">-6984</div>
<div class="c" style="left:810.75px;top:568.5px;width:50px;height:13px;line-height:13px;text-align:center;color:#f07478;">-0.10</div>
<div class="c" style="left:810.75px;top:623.1px;width:50px;height:13px;line-height:13px;text-align:center;color:#f07478;">-294.74</div>
<div class="c" style="left:810.75px;top:549.9px;width:50px;height:13px;line-height:13px;text-align:center;color:#7676f2;">18.46</div>
<div class="c" style="left:810.75px;top:605px;width:50px;height:13px;line-height:13px;text-align:center;color:#7676f2;">405.35</div>
<div class="c" style="left:872.2px;top:493.8px;width:50px;height:13px;line-height:13px;text-align:center;color:#f07478;">-12%</div>
<div class="c" style="left:872.2px;top:504.1px;width:50px;height:13px;line-height:13px;text-align:center;color:#f07478;">-6182</div>
<div class="c" style="left:872.2px;top:568.5px;width:50px;height:13px;line-height:13px;text-align:center;color:#f07478;">-0.09</div>
<div class="c" style="left:872.2px;top:623.1px;width:50px;height:13px;line-height:13px;text-align:center;color:#f07478;">-259.68</div>
<div class="c" style="left:872.2px;top:549.9px;width:50px;height:13px;line-height:13px;text-align:center;color:#7676f2;">13.75</div>
<div class="c" style="left:872.2px;top:605px;width:50px;height:13px;line-height:13px;text-align:center;color:#7676f2;">358.75</div>
<div class="c" style="left:933.65px;top:493.8px;width:50px;height:13px;line-height:13px;text-align:center;color:#f07478;">-11%</div>
<div class="c" style="left:933.65px;top:504.1px;width:50px;height:13px;line-height:13px;text-align:center;color:#f07478;">-5598</div>
<div class="c" style="left:933.65px;top:568.5px;width:50px;height:13px;line-height:13px;text-align:center;color:#f07478;">-0.07</div>
<div class="c" style="left:933.65px;top:623.1px;width:50px;height:13px;line-height:13px;text-align:center;color:#f07478;">-222.34</div>
<div class="c" style="left:933.65px;top:549.9px;width:50px;height:13px;line-height:13px;text-align:center;color:#7676f2;">9.74</div>
<div class="c" style="left:933.65px;top:605px;width:50px;height:13px;line-height:13px;text-align:center;color:#7676f2;">308.62</div>
<div class="c" style="left:995.1px;top:493.8px;width:50px;height:13px;line-height:13px;text-align:center;color:#f07478;">-10%</div>
<div class="c" style="left:995.1px;top:504.1px;width:50px;height:13px;line-height:13px;text-align:center;color:#f07478;">-5197</div>
<div class="c" style="left:995.1px;top:568.5px;width:50px;height:13px;line-height:13px;text-align:center;color:#f07478;">-0.06</div>
<div class="c" style="left:995.1px;top:623.1px;width:50px;height:13px;line-height:13px;text-align:center;color:#f07478;">-184.61</div>
<div class="c" style="left:995.1px;top:549.9px;width:50px;height:13px;line-height:13px;text-align:center;color:#7676f2;">6.42</div>
<div class="c" style="left:995.1px;top:605px;width:50px;height:13px;line-height:13px;text-align:center;color:#7676f2;">257.73</div>
<div class="c" style="left:1056.55px;top:493.8px;width:50px;height:13px;line-height:13px;text-align:center;color:#f07478;">-10%</div>
<div class="c" style="left:1056.55px;top:504.1px;width:50px;height:13px;line-height:13px;text-align:center;color:#f07478;">-4952</div>
<div class="c" style="left:1056.55px;top:568.5px;width:50px;height:13px;line-height:13px;text-align:center;color:#f07478;">-0.04</div>
<div class="c" style="left:1056.55px;top:623.1px;width:50px;height:13px;line-height:13px;text-align:center;color:#f07478;">-146.80</div>
<div class="c" style="left:1056.55px;top:549.9px;width:50px;height:13px;line-height:13px;text-align:center;color:#7676f2;">3.52</div>
<div class="c" style="left:1056.55px;top:605px;width:50px;height:13px;line-height:13px;text-align:center;color:#7676f2;">208.11</div>
<div style="left:602.7px;top:513.9px;width:79.92px;height:9.9px;background:#f3787c;border:1px solid #666a74;box-sizing:border-box;"></div>
<div style="left:602.7px;top:541.3px;width:79.92px;height:9.6px;background:#5a7af8;border:1px solid #666a74;box-sizing:border-box;"></div>
<div style="left:602.7px;top:577.7px;width:79.92px;height:9.9px;background:#f3787c;border:1px solid #666a74;box-sizing:border-box;"></div>
<div style="left:602.7px;top:596.2px;width:79.92px;height:9.9px;background:#5a7af8;border:1px solid #666a74;box-sizing:border-box;"></div>
<div style="left:602.7px;top:632.5px;width:79.92px;height:9.6px;background:#f3787c;border:1px solid #666a74;box-sizing:border-box;"></div>
<div style="left:681.62px;top:513.9px;width:62.45px;height:8.2px;background:#f3787c;border:1px solid #666a74;box-sizing:border-box;"></div>
<div style="left:681.62px;top:543.3px;width:62.45px;height:7.6px;background:#5a7af8;border:1px solid #666a74;box-sizing:border-box;"></div>
<div style="left:681.62px;top:577.7px;width:62.45px;height:9.2px;background:#f3787c;border:1px solid #666a74;box-sizing:border-box;"></div>
<div style="left:681.62px;top:596.8px;width:62.45px;height:9.3px;background:#5a7af8;border:1px solid #666a74;box-sizing:border-box;"></div>
<div style="left:681.62px;top:632.5px;width:62.45px;height:9.2px;background:#f3787c;border:1px solid #666a74;box-sizing:border-box;"></div>
<div style="left:743.08px;top:513.9px;width:62.45px;height:6.8px;background:#f3787c;border:1px solid #666a74;box-sizing:border-box;"></div>
<div style="left:743.08px;top:544.6px;width:62.45px;height:6.3px;background:#5a7af8;border:1px solid #666a74;box-sizing:border-box;"></div>
<div style="left:743.08px;top:577.7px;width:62.45px;height:8.4px;background:#f3787c;border:1px solid #666a74;box-sizing:border-box;"></div>
<div style="left:743.08px;top:597.7px;width:62.45px;height:8.4px;background:#5a7af8;border:1px solid #666a74;box-sizing:border-box;"></div>
<div style="left:743.08px;top:632.5px;width:62.45px;height:8.7px;background:#f3787c;border:1px solid #666a74;box-sizing:border-box;"></div>
<div style="left:804.52px;top:513.9px;width:62.45px;height:6.3px;background:#f3787c;border:1px solid #666a74;box-sizing:border-box;"></div>
<div style="left:804.52px;top:545.5px;width:62.45px;height:5.4px;background:#5a7af8;border:1px solid #666a74;box-sizing:border-box;"></div>
<div style="left:804.52px;top:577.7px;width:62.45px;height:7.8px;background:#f3787c;border:1px solid #666a74;box-sizing:border-box;"></div>
<div style="left:804.52px;top:598.1px;width:62.45px;height:8px;background:#5a7af8;border:1px solid #666a74;box-sizing:border-box;"></div>
<div style="left:804.52px;top:632.5px;width:62.45px;height:7.95px;background:#f3787c;border:1px solid #666a74;box-sizing:border-box;"></div>
<div style="left:865.98px;top:513.9px;width:62.45px;height:5.9px;background:#f3787c;border:1px solid #666a74;box-sizing:border-box;"></div>
<div style="left:865.98px;top:546.6px;width:62.45px;height:4.3px;background:#5a7af8;border:1px solid #666a74;box-sizing:border-box;"></div>
<div style="left:865.98px;top:577.7px;width:62.45px;height:7.2px;background:#f3787c;border:1px solid #666a74;box-sizing:border-box;"></div>
<div style="left:865.98px;top:598.8px;width:62.45px;height:7.3px;background:#5a7af8;border:1px solid #666a74;box-sizing:border-box;"></div>
<div style="left:865.98px;top:632.5px;width:62.45px;height:7.1px;background:#f3787c;border:1px solid #666a74;box-sizing:border-box;"></div>
<div style="left:927.42px;top:513.9px;width:62.45px;height:5px;background:#f3787c;border:1px solid #666a74;box-sizing:border-box;"></div>
<div style="left:927.42px;top:547.7px;width:62.45px;height:3.2px;background:#5a7af8;border:1px solid #666a74;box-sizing:border-box;"></div>
<div style="left:927.42px;top:577.7px;width:62.45px;height:5.7px;background:#f3787c;border:1px solid #666a74;box-sizing:border-box;"></div>
<div style="left:927.42px;top:599.7px;width:62.45px;height:6.4px;background:#5a7af8;border:1px solid #666a74;box-sizing:border-box;"></div>
<div style="left:927.42px;top:632.5px;width:62.45px;height:6.25px;background:#f3787c;border:1px solid #666a74;box-sizing:border-box;"></div>
<div style="left:988.88px;top:513.9px;width:62.45px;height:4.8px;background:#f3787c;border:1px solid #666a74;box-sizing:border-box;"></div>
<div style="left:988.88px;top:548.4px;width:62.45px;height:2.5px;background:#5a7af8;border:1px solid #666a74;box-sizing:border-box;"></div>
<div style="left:988.88px;top:577.7px;width:62.45px;height:5px;background:#f3787c;border:1px solid #666a74;box-sizing:border-box;"></div>
<div style="left:988.88px;top:600.6px;width:62.45px;height:5.5px;background:#5a7af8;border:1px solid #666a74;box-sizing:border-box;"></div>
<div style="left:988.88px;top:632.5px;width:62.45px;height:5.4px;background:#f3787c;border:1px solid #666a74;box-sizing:border-box;"></div>
<div style="left:1050.33px;top:513.9px;width:40.17px;height:4.3px;background:#f3787c;border:1px solid #666a74;box-sizing:border-box;"></div>
<div style="left:1050.33px;top:549px;width:40.17px;height:1.9px;background:#5a7af8;border:1px solid #666a74;box-sizing:border-box;"></div>
<div style="left:1050.33px;top:577.7px;width:40.17px;height:3.9px;background:#f3787c;border:1px solid #666a74;box-sizing:border-box;"></div>
<div style="left:1050.33px;top:601.9px;width:40.17px;height:4.2px;background:#5a7af8;border:1px solid #666a74;box-sizing:border-box;"></div>
<div style="left:1050.33px;top:632.5px;width:40.17px;height:4.4px;background:#f3787c;border:1px solid #666a74;box-sizing:border-box;"></div>
<div style="left:852.6px;top:476.7px;width:42.1px;height:171px;background:rgba(234,241,250,.88);border:1px solid #8c9bb3;border-radius:3.5px;box-sizing:border-box;"></div>
<div class="c" style="left:852.9px;top:476px;width:41.6px;height:13px;line-height:13px;text-align:center;color:#333;">5580.94</div>
<div class="c" style="left:852.9px;top:504.8px;width:41.6px;height:13px;line-height:13px;text-align:center;color:#ee2a2e;font-size:8.95px;">-6,460</div>
<div class="c" style="left:852.9px;top:518.1px;width:41.6px;height:13px;line-height:13px;text-align:center;color:#ee2a2e;font-size:8.95px;">-12.9%</div>
<div class="c" style="left:852.9px;top:545.7px;width:41.6px;height:13px;line-height:13px;text-align:center;color:#3434ee;font-size:8.95px;">15.46</div>
<div class="c" style="left:852.9px;top:573px;width:41.6px;height:13px;line-height:13px;text-align:center;color:#ee2a2e;font-size:8.95px;">-0.09</div>
<div class="c" style="left:852.9px;top:599.7px;width:41.6px;height:13px;line-height:13px;text-align:center;color:#3434ee;font-size:8.95px;">377.10</div>
<div class="c" style="left:852.9px;top:627.5px;width:41.6px;height:13px;line-height:13px;text-align:center;color:#ee2a2e;font-size:8.95px;">-273.43</div>
<div style="left:555px;top:651.8px;width:525px;height:21.1px;background:#293553;"></div>
<div class="t" style="left:1039px;top:656.4px;width:30px;height:14px;line-height:14px;text-align:left;color:#e9ecf3;letter-spacing:0.10px;">380%</div>
<div style="left:1072.6px;top:661.8px;width:5px;height:1.2px;background:#e9ecf3;"></div>
<div style="left:555px;top:672.9px;width:525px;height:3px;background:#bdc4d5;"></div>
</div>
</body></html>
